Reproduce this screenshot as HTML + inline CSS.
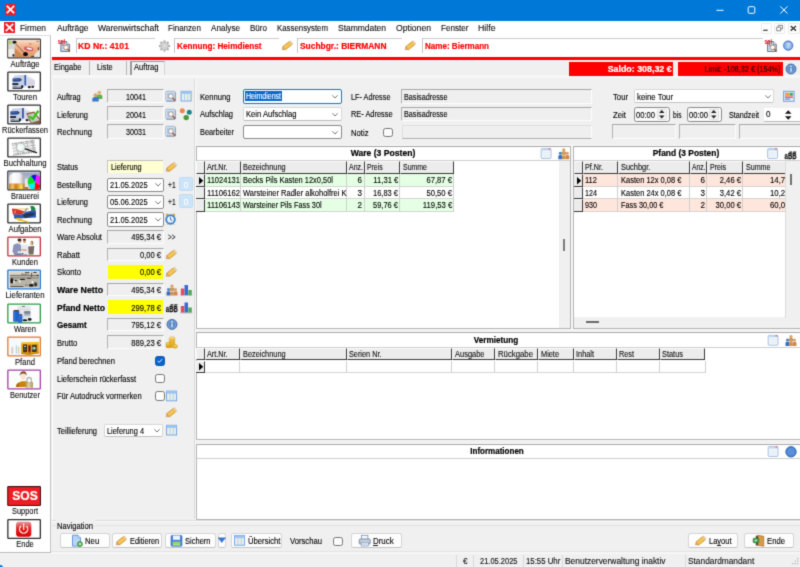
<!DOCTYPE html>
<html><head><meta charset="utf-8"><title>Auftrag</title>
<style>
html,body{margin:0;padding:0;}
body{width:800px;height:567px;overflow:hidden;background:#f0f0f0;font-family:"Liberation Sans",sans-serif;font-size:11px;}
#root{position:relative;width:800px;height:567px;overflow:hidden;background:#f0f0f0;filter:url(#soft);}
#root div{position:absolute;box-sizing:border-box;}
#root svg{position:absolute;overflow:visible;}
.t{position:absolute;white-space:nowrap;font-family:"Liberation Sans",sans-serif;}
.fld{background:#f0f0f0;border:1px solid #fcfcfc;border-top-color:#a6a6a6;border-left-color:#b2b2b2;}
.cmb{background:#fff;border:1px solid #7a7a7a;border-radius:2px;}
.btn{background:#fdfdfd;border:1px solid #d0d0d0;border-radius:3px;}
.pnl{background:#fff;border:1px solid #b8b8b8;}
.hd{background:#f0f0f0;border-right:2px solid #404040;border-bottom:2px solid #404040;border-left:1px solid #fff;border-top:1px solid #fff;}
.sb{border:2px solid #1a1a1a;background:#fff;overflow:hidden;}
.cb{background:#fff;border:1px solid #444;border-radius:2.5px;}

</style></head>
<body>
<svg width="0" height="0" style="position:absolute"><filter id="soft" x="0" y="0" width="100%" height="100%" color-interpolation-filters="sRGB"><feConvolveMatrix order="3" kernelMatrix="0.0196 0.1008 0.0196 0.1008 0.5184 0.1008 0.0196 0.1008 0.0196" edgeMode="duplicate" preserveAlpha="true"/></filter></svg>
<div id="root">
<div style="left:0px;top:0px;width:800px;height:21px;background:#0078d7;"></div>
<svg style="left:5px;top:4px" width="11" height="11" viewBox="0 0 11 11"><rect width="11" height="11" fill="#ee1c25"/><path d="M2.4 2.4L8.6 8.6M8.6 2.4L2.4 8.6" stroke="#fff" stroke-width="1.7" stroke-linecap="square"/></svg>
<svg style="left:700px;top:0" width="100" height="21" viewBox="0 0 100 21"><g stroke="#fff" stroke-width="1" fill="none"><path d="M16.400 10.300H23.600"/><rect x="48.200" y="6.700" width="6.600" height="6.600" rx="1"/><path d="M80.300 6.400L87.500 13.600M87.500 6.400L80.300 13.600"/></g></svg>
<div style="left:0px;top:21px;width:800px;height:14px;background:#fff;"></div>
<svg style="left:4px;top:22px" width="11" height="11" viewBox="0 0 11 11"><rect width="11" height="11" fill="#ee1c25"/><path d="M2.4 2.4L8.6 8.6M8.6 2.4L2.4 8.6" stroke="#fff" stroke-width="1.7" stroke-linecap="square"/></svg>
<span class="t" style="top:21.0px;font-size:8.5px;line-height:14px;color:#111;-webkit-text-stroke:.12px;left:20px;transform-origin:0 50%;transform:scaleX(0.9829);">Firmen</span>
<span class="t" style="top:21.0px;font-size:8.5px;line-height:14px;color:#111;-webkit-text-stroke:.12px;left:56.5px;transform-origin:0 50%;transform:scaleX(0.9801);">Aufträge</span>
<span class="t" style="top:21.0px;font-size:8.5px;line-height:14px;color:#111;-webkit-text-stroke:.12px;left:98px;transform-origin:0 50%;transform:scaleX(1.0062);">Warenwirtschaft</span>
<span class="t" style="top:21.0px;font-size:8.5px;line-height:14px;color:#111;-webkit-text-stroke:.12px;left:168px;transform-origin:0 50%;transform:scaleX(0.9437);">Finanzen</span>
<span class="t" style="top:21.0px;font-size:8.5px;line-height:14px;color:#111;-webkit-text-stroke:.12px;left:211px;transform-origin:0 50%;transform:scaleX(0.9587);">Analyse</span>
<span class="t" style="top:21.0px;font-size:8.5px;line-height:14px;color:#111;-webkit-text-stroke:.12px;left:250px;transform-origin:0 50%;transform:scaleX(0.9461);">Büro</span>
<span class="t" style="top:21.0px;font-size:8.5px;line-height:14px;color:#111;-webkit-text-stroke:.12px;left:277px;transform-origin:0 50%;transform:scaleX(0.9226);">Kassensystem</span>
<span class="t" style="top:21.0px;font-size:8.5px;line-height:14px;color:#111;-webkit-text-stroke:.12px;left:338px;transform-origin:0 50%;transform:scaleX(0.9958);">Stammdaten</span>
<span class="t" style="top:21.0px;font-size:8.5px;line-height:14px;color:#111;-webkit-text-stroke:.12px;left:396px;transform-origin:0 50%;transform:scaleX(1.0145);">Optionen</span>
<span class="t" style="top:21.0px;font-size:8.5px;line-height:14px;color:#111;-webkit-text-stroke:.12px;left:441px;transform-origin:0 50%;transform:scaleX(0.9539);">Fenster</span>
<span class="t" style="top:21.0px;font-size:8.5px;line-height:14px;color:#111;-webkit-text-stroke:.12px;left:477.5px;transform-origin:0 50%;transform:scaleX(1.0285);">Hilfe</span>
<div style="left:760.7px;top:22.5px;width:11.0px;height:11.3px;background:#fdfdfd;border:1px solid #ececec;border-radius:1px;"></div>
<div style="left:774px;top:22.5px;width:11px;height:11.3px;background:#fdfdfd;border:1px solid #ececec;border-radius:1px;"></div>
<div style="left:787.5px;top:22.5px;width:12.5px;height:11.3px;background:#fdfdfd;border:1px solid #ececec;border-radius:1px;"></div>
<svg style="left:755px;top:21px" width="45" height="14" viewBox="0 0 45 14"><g fill="none"><path d="M8.200 9.300H12.700" stroke="#4a4a4a" stroke-width="1.300"/><path d="M21.700 6.200h4v3.600h-4zM23.200 6v-1.600h4.200v3.600h-1.500" stroke="#7a7a7a" stroke-width=".9"/><path d="M35.700 5L41 9.600M41 5L35.700 9.600" stroke="#3a3a3a" stroke-width="1.400"/></g></svg>
<div style="left:0px;top:35px;width:51px;height:517.5px;background:#fff;border-right:1px solid #c4c4c4;border-top:1px solid #dcdcdc;border-bottom:1px solid #b8b8b8;"></div>
<div style="left:51px;top:35px;width:749px;height:22px;background:#fff;"></div>
<div style="left:52px;top:56.8px;width:748px;height:3px;background:#ff0000;"></div>
<div style="left:51px;top:550.7px;width:749px;height:1px;background:#e4e4e4;"></div>
<div style="left:51px;top:551.7px;width:749px;height:2.8px;background:#f6f6f6;"></div>
<div style="left:0px;top:553.2px;width:51px;height:1.3px;background:#f6f6f6;"></div>
<svg style="left:7px;top:38px" width="35" height="22" viewBox="0 0 35 22"><g transform="translate(0.2,0.4)"><rect x=".65" y=".65" width="32.500" height="18.900" rx=".8" fill="#fff" stroke="#333" stroke-width="1.300"/><g transform="scale(.052493) translate(-61,-45)"><defs><linearGradient id="sk" x1="0" y1="0" x2="0" y2="1"><stop offset="0" stop-color="#f9dcc6"/><stop offset=".35" stop-color="#f2b48c"/><stop offset="1" stop-color="#e09a68"/></linearGradient></defs><rect x="85" y="80" width="600" height="320" fill="url(#sk)"/><rect x="85" y="80" width="120" height="320" fill="#d4d8d2"/><rect x="85" y="250" width="110" height="150" fill="#eeeeee"/><ellipse cx="115" cy="125" rx="28" ry="38" fill="#a8d058"/><path d="M205 230L390 400H205z" fill="#cf8a55"/><path d="M600 330L685 250V400H560z" fill="#e6e6e6"/><ellipse cx="500" cy="150" rx="32" ry="18" fill="#dc9672"/><ellipse cx="470" cy="245" rx="92" ry="42" transform="rotate(12 470 245)" fill="#d9586a"/><ellipse cx="482" cy="240" rx="56" ry="17" transform="rotate(12 482 240)" fill="#fff"/><ellipse cx="200" cy="118" rx="38" ry="28" fill="#1a1a1a"/><path d="M225 150L385 320" stroke="#4a4038" stroke-width="13"/><ellipse cx="410" cy="345" rx="46" ry="40" fill="#0a0a10"/><ellipse cx="655" cy="240" rx="12" ry="30" fill="#5a4030"/><ellipse cx="640" cy="100" rx="32" ry="10" fill="#a07850"/><ellipse cx="180" cy="370" rx="18" ry="26" fill="#2a2018"/><ellipse cx="545" cy="388" rx="32" ry="11" fill="#5a3a20"/></g></g></svg>
<span class="t" style="top:57.2px;font-size:9px;line-height:14px;color:#111;-webkit-text-stroke:.12px;left:-125.5px;width:300px;text-align:center;transform-origin:50% 50%;transform:scaleX(0.8522);">Aufträge</span>
<svg style="left:7px;top:71px" width="35" height="22" viewBox="0 0 35 22"><g transform="translate(0.2,0.4)"><rect x=".65" y=".65" width="32.500" height="18.900" rx=".8" fill="#fff" stroke="#2e2e2e" stroke-width="1.300"/><g transform="scale(.052493) translate(-61,-45)"><g transform="translate(0,0)"><path d="M420 112L590 215V332H420z" fill="#d6d8ec"/><path d="M250 112L440 108L590 215L420 150z" fill="#e8eaf4"/><path d="M470 250h95v22h-95z" fill="#ecc6d0" opacity=".8"/><rect x="385" y="115" width="36" height="200" fill="#3a5aa8"/><path d="M160 185L205 125L385 115V350L160 375z" fill="#c9d2e6"/><path d="M165 178L312 172V236L165 240z" fill="#27468c"/><path d="M170 200h135v10H170z" fill="#5a82c8"/><ellipse cx="322" cy="205" rx="14" ry="18" fill="#1a2238"/><path d="M160 268h112v34H160z" fill="#161824"/><path d="M160 312h185v50H160z" fill="#b4c0d8"/><path d="M165 355h180v24H165z" fill="#272d3c"/><path d="M180 320h60v22h-60z" fill="#8a8e98"/><ellipse cx="346" cy="338" rx="22" ry="28" fill="#15161c"/><ellipse cx="402" cy="345" rx="22" ry="16" fill="#e8e8ee"/><ellipse cx="482" cy="346" rx="30" ry="22" fill="#1c1d24"/><ellipse cx="547" cy="340" rx="26" ry="20" fill="#22232a"/></g></g></g></svg>
<span class="t" style="top:90.2px;font-size:9px;line-height:14px;color:#111;-webkit-text-stroke:.12px;left:-125.5px;width:300px;text-align:center;transform-origin:50% 50%;transform:scaleX(0.8717);">Touren</span>
<svg style="left:7px;top:104px" width="35" height="22" viewBox="0 0 35 22"><g transform="translate(0.2,0.4)"><rect x=".65" y=".65" width="32.500" height="18.900" rx=".8" fill="#fff" stroke="#2e2e2e" stroke-width="1.300"/><g transform="scale(.052493) translate(-61,-45)"><g transform="translate(-42,0)"><path d="M420 112L590 215V332H420z" fill="#d6d8ec"/><path d="M250 112L440 108L590 215L420 150z" fill="#e8eaf4"/><path d="M470 250h95v22h-95z" fill="#ecc6d0" opacity=".8"/><rect x="385" y="115" width="36" height="200" fill="#3a5aa8"/><path d="M160 185L205 125L385 115V350L160 375z" fill="#c9d2e6"/><path d="M165 178L312 172V236L165 240z" fill="#27468c"/><path d="M170 200h135v10H170z" fill="#5a82c8"/><ellipse cx="322" cy="205" rx="14" ry="18" fill="#1a2238"/><path d="M160 268h112v34H160z" fill="#161824"/><path d="M160 312h185v50H160z" fill="#b4c0d8"/><path d="M165 355h180v24H165z" fill="#272d3c"/><path d="M180 320h60v22h-60z" fill="#8a8e98"/><ellipse cx="346" cy="338" rx="22" ry="28" fill="#15161c"/><ellipse cx="402" cy="345" rx="22" ry="16" fill="#e8e8ee"/><ellipse cx="482" cy="346" rx="30" ry="22" fill="#1c1d24"/><ellipse cx="547" cy="340" rx="26" ry="20" fill="#22232a"/></g><path d="M425 215L575 178L690 325V400H505z" fill="#8c5c3c"/><path d="M452 238L568 208L680 345L522 396z" fill="#c9cdc2"/><path d="M480 268L548 322L655 165" stroke="#3cc41e" stroke-width="46" fill="none"/></g></g></svg>
<span class="t" style="top:123.2px;font-size:9px;line-height:14px;color:#111;-webkit-text-stroke:.12px;left:-125.5px;width:300px;text-align:center;transform-origin:50% 50%;transform:scaleX(0.8359);">Rückerfassen</span>
<svg style="left:7px;top:137px" width="35" height="22" viewBox="0 0 35 22"><g transform="translate(0.2,0.4)"><rect x=".65" y=".65" width="32.500" height="18.900" rx=".8" fill="#fff" stroke="#2e2e2e" stroke-width="1.300"/><g transform="scale(.052493) translate(-61,-45)"><path d="M140 150L580 85L622 330L190 392z" fill="#f1f1f1"/><g stroke="#8e8e8e" stroke-width="9" fill="none"><path d="M150 200L590 135M160 255L600 190M170 310L610 245M180 362L615 300"/><path d="M225 140L270 380M330 122L375 365M430 108L475 350M520 95L565 338"/></g><g stroke="#5e5e5e" stroke-width="12" stroke-dasharray="26 16" fill="none"><path d="M150 168L580 104M175 385L610 322"/><path d="M545 100L590 330"/></g><circle cx="320" cy="235" r="82" fill="#e9f5f5" stroke="#a4acac" stroke-width="15"/><path d="M300 170l20 40 40 10-35 25-5 45-30-30-40 5 20-40-15-35z" fill="#fff" opacity=".8"/><path d="M408 262L622 338" stroke="#0e0e0e" stroke-width="24" stroke-linecap="round"/></g></g></svg>
<span class="t" style="top:156.2px;font-size:9px;line-height:14px;color:#111;-webkit-text-stroke:.12px;left:-125.5px;width:300px;text-align:center;transform-origin:50% 50%;transform:scaleX(0.8592);">Buchhaltung</span>
<svg style="left:7px;top:170px" width="35" height="22" viewBox="0 0 35 22"><g transform="translate(0.2,0.4)"><rect x=".65" y=".65" width="32.500" height="18.900" rx=".8" fill="#fff" stroke="#2e2e2e" stroke-width="1.300"/><g transform="scale(.052493) translate(-61,-45)"><defs><linearGradient id="bg5" x1="0" y1="0" x2="0" y2="1"><stop offset="0" stop-color="#97a2bf"/><stop offset=".6" stop-color="#c6cad8"/><stop offset="1" stop-color="#d8c8b8"/></linearGradient><linearGradient id="tk" x1="0" y1="0" x2="1" y2="0"><stop offset="0" stop-color="#e4e4e6"/><stop offset=".3" stop-color="#ffffff"/><stop offset=".7" stop-color="#f0f0f2"/><stop offset="1" stop-color="#a8a8ae"/></linearGradient><linearGradient id="cu" x1="0" y1="0" x2="1" y2="0"><stop offset="0" stop-color="#b87820"/><stop offset=".2" stop-color="#f4c860"/><stop offset=".45" stop-color="#c87c18"/><stop offset=".8" stop-color="#ffe060"/><stop offset="1" stop-color="#a86810"/></linearGradient><clipPath id="c5"><rect x="85" y="78" width="600" height="324"/></clipPath></defs><g clip-path="url(#c5)"><rect x="85" y="78" width="600" height="324" fill="url(#bg5)"/><path d="M400 400V230Q400 200 430 200T460 230V400z" fill="#ebe4ec"/><path d="M98 300V190Q98 85 240 85T385 190V300z" fill="url(#tk)"/><rect x="98" y="298" width="292" height="104" fill="url(#cu)"/><rect x="98" y="298" width="292" height="14" fill="#d8a050" opacity=".7"/><path d="M390 360h70v42h-70z" fill="#b87830"/><path d="M595 270L513.6 153.7A142 142 0 0 1 619.7 130.2z" fill="#1212e6"/><path d="M595 270L619.7 130.2A142 142 0 0 1 718.0 341.0z" fill="#ff12ff"/><path d="M595 270L718.0 341.0A142 142 0 0 1 575.2 410.6z" fill="#ff0a0a"/><path d="M595 270L575.2 410.6A142 142 0 0 1 461.6 318.6z" fill="#00f2f2"/><path d="M595 270L461.6 318.6A142 142 0 0 1 513.6 153.7z" fill="#00e222"/></g></g></g></svg>
<span class="t" style="top:189.2px;font-size:9px;line-height:14px;color:#111;-webkit-text-stroke:.12px;left:-125.5px;width:300px;text-align:center;transform-origin:50% 50%;transform:scaleX(0.8228);">Brauerei</span>
<svg style="left:7px;top:203px" width="35" height="22" viewBox="0 0 35 22"><g transform="translate(0.2,0.4)"><rect x=".65" y=".65" width="32.500" height="18.900" rx=".8" fill="#fff" stroke="#2e2e2e" stroke-width="1.300"/><g transform="scale(.052493) translate(-61,-45)"><path d="M200 155L480 150" stroke="#f0b424" stroke-width="15"/><path d="M150 140L232 150L402 200L330 262L170 256z" fill="#e0301e"/><path d="M205 175l25 5-15 60-20-5z" fill="#c8c8e0" opacity=".7"/><path d="M180 250L330 256L420 202L600 170L612 312L200 337z" fill="#2a5ab8"/><path d="M350 250L600 200V255L400 330z" fill="#27303f" opacity=".85"/><path d="M442 138L360 250" stroke="#8c8c92" stroke-width="26"/><path d="M500 95H560L602 140L590 182L520 170z" fill="#1a8a3a"/><path d="M520 170L600 185L605 240L500 215z" fill="#2f55a0"/><ellipse cx="290" cy="350" rx="62" ry="25" transform="rotate(15 290 350)" fill="#f0c222"/><path d="M330 365L460 400" stroke="#e8b212" stroke-width="26" stroke-linecap="round"/></g></g></svg>
<span class="t" style="top:222.2px;font-size:9px;line-height:14px;color:#111;-webkit-text-stroke:.12px;left:-125.5px;width:300px;text-align:center;transform-origin:50% 50%;transform:scaleX(0.8561);">Aufgaben</span>
<svg style="left:7px;top:236px" width="35" height="22" viewBox="0 0 35 22"><g transform="translate(0.2,0.4)"><rect x=".65" y=".65" width="32.500" height="18.900" rx=".8" fill="#fafefe" stroke="#c62f3a" stroke-width="1.300"/><g transform="scale(.052493) translate(-61,-45)"><path d="M200 380H440V400H200z" fill="#5a7aa8"/><path d="M160 335L182 205L252 176L322 202L332 385L192 392z" fill="#8a94b8"/><ellipse cx="300" cy="138" rx="30" ry="36" fill="#dfa888"/><ellipse cx="295" cy="112" rx="38" ry="26" fill="#33261e"/><path d="M322 202L452 200L462 392L332 392z" fill="#e6eaf2"/><ellipse cx="390" cy="142" rx="26" ry="30" fill="#d89870"/><ellipse cx="390" cy="108" rx="30" ry="18" fill="#4a3020"/><path d="M460 236L577 230L562 382L470 382z" fill="#776a68"/><ellipse cx="533" cy="172" rx="27" ry="42" fill="#a87850"/><ellipse cx="514" cy="182" rx="20" ry="26" fill="#f2c4a4"/><path d="M330 285L432 296L428 322L332 312z" fill="#d8a080"/><path d="M258 330L442 342L440 368L262 360z" fill="#e8f2f2"/><ellipse cx="352" cy="372" rx="22" ry="9" fill="#222"/><path d="M470 380h90v18h-90z" fill="#98b878"/></g></g></svg>
<span class="t" style="top:255.2px;font-size:9px;line-height:14px;color:#111;-webkit-text-stroke:.12px;left:-125.5px;width:300px;text-align:center;transform-origin:50% 50%;transform:scaleX(0.8379);">Kunden</span>
<svg style="left:7px;top:269px" width="35" height="22" viewBox="0 0 35 22"><g transform="translate(0.2,0.4)"><rect x=".65" y=".65" width="32.500" height="18.900" rx=".8" fill="#fbe6d8" stroke="#1b79da" stroke-width="1.300"/><g transform="scale(.052493) translate(-61,-45)"><rect x="112" y="92" width="556" height="296" fill="#b7b3a7"/><rect x="112" y="92" width="556" height="58" fill="#d9d5c9"/><path d="M112 150h556v16H112z" fill="#6b6961"/><path d="M400 98h82v20h-82zM560 96h60v16h-60z" fill="#33332f"/><rect x="520" y="108" width="15" height="95" fill="#3a3a37"/><path d="M330 120L500 150L330 165z" fill="#8a877d"/><path d="M112 190h556v30H112z" fill="#989488"/><ellipse cx="150" cy="262" rx="32" ry="52" fill="#1b1b19"/><ellipse cx="222" cy="255" rx="28" ry="15" fill="#292927"/><ellipse cx="352" cy="236" rx="52" ry="12" fill="#1b1b19"/><ellipse cx="480" cy="215" rx="40" ry="10" fill="#33332f"/><ellipse cx="190" cy="282" rx="15" ry="36" fill="#f1f1e9"/><ellipse cx="300" cy="272" rx="16" ry="32" fill="#e9e9e1"/><ellipse cx="540" cy="286" rx="15" ry="26" fill="#fff"/><ellipse cx="520" cy="350" rx="46" ry="25" fill="#1a1a18"/><ellipse cx="602" cy="330" rx="30" ry="42" fill="#3a3a37"/><ellipse cx="640" cy="160" rx="22" ry="12" fill="#33332f"/><path d="M120 365h250v16H120z" fill="#3f3e3a"/><path d="M400 330h60v30h-60z" fill="#8f8c82"/></g></g></svg>
<span class="t" style="top:288.2px;font-size:9px;line-height:14px;color:#111;-webkit-text-stroke:.12px;left:-125.5px;width:300px;text-align:center;transform-origin:50% 50%;transform:scaleX(0.8658);">Lieferanten</span>
<svg style="left:7px;top:303px" width="35" height="22" viewBox="0 0 35 22"><g transform="translate(0.2,0.4)"><rect x=".65" y=".65" width="32.500" height="18.900" rx=".8" fill="#fffaff" stroke="#2b9a48" stroke-width="1.300"/><g transform="scale(.052493) translate(-61,-45)"><defs><linearGradient id="ib" x1="0" y1="0" x2="0" y2="1"><stop offset="0" stop-color="#56657c"/><stop offset="1" stop-color="#d4d8dc"/></linearGradient></defs><rect x="250" y="95" width="262" height="296" fill="#e9ebed"/><g stroke="#c9ccd0" stroke-width="8"><path d="M250 160h262M250 230h262M250 300h262M315 95v296M380 95v296M445 95v296"/></g><rect x="340" y="93" width="62" height="17" fill="#6a6a6e"/><rect x="385" y="195" width="117" height="98" fill="url(#ib)"/><rect x="175" y="178" width="116" height="218" rx="22" fill="#1f60c9"/><rect x="186" y="170" width="96" height="20" rx="6" fill="#4a3a2a"/><rect x="195" y="200" width="22" height="180" fill="#4d8ae8" opacity=".6"/><rect x="265" y="256" width="86" height="156" rx="18" fill="#2a68d2"/><rect x="270" y="250" width="76" height="18" rx="6" fill="#5a4a3a"/><ellipse cx="400" cy="366" rx="46" ry="18" fill="#111"/><ellipse cx="490" cy="350" rx="36" ry="26" fill="#191919"/><ellipse cx="440" cy="340" rx="16" ry="12" fill="#e8e8e8"/></g></g></svg>
<span class="t" style="top:322.2px;font-size:9px;line-height:14px;color:#111;-webkit-text-stroke:.12px;left:-125.5px;width:300px;text-align:center;transform-origin:50% 50%;transform:scaleX(0.8401);">Waren</span>
<svg style="left:7px;top:336px" width="35" height="22" viewBox="0 0 35 22"><g transform="translate(0.2,0.4)"><rect x=".65" y=".65" width="32.500" height="18.900" rx=".8" fill="#f4faff" stroke="#e07a30" stroke-width="1.300"/><g transform="scale(.052493) translate(-61,-45)"><rect x="140" y="252" width="36" height="125" rx="10" fill="#d9cabb"/><rect x="150" y="230" width="14" height="40" fill="#e6dccf"/><rect x="224" y="212" width="28" height="165" rx="10" fill="#b7dbd0"/><rect x="266" y="242" width="30" height="135" rx="10" fill="#e9d2b2"/><path d="M328 165L660 150L666 366L482 396L328 376z" fill="#e6a00e"/><path d="M328 160L660 146V186L328 196z" fill="#f8c41e"/><path d="M328 350L482 372L666 342V368L482 398L328 378z" fill="#c8860a"/><rect x="365" y="200" width="72" height="146" fill="#2a1a18"/><rect x="465" y="215" width="42" height="136" fill="#5a1018"/><path d="M535 210L622 205V338L535 342z" fill="#3a2a20"/><circle cx="400" cy="235" r="18" fill="#e8e8f0"/><circle cx="398" cy="285" r="20" fill="#2a8a4a"/><circle cx="402" cy="325" r="14" fill="#c82828"/><circle cx="486" cy="330" r="12" fill="#3a5a9a"/><circle cx="570" cy="270" r="32" fill="#7fb898"/><circle cx="585" cy="265" r="14" fill="#e8f0e8"/></g></g></svg>
<span class="t" style="top:355.2px;font-size:9px;line-height:14px;color:#111;-webkit-text-stroke:.12px;left:-125.5px;width:300px;text-align:center;transform-origin:50% 50%;transform:scaleX(0.8499);">Pfand</span>
<svg style="left:7px;top:369px" width="35" height="22" viewBox="0 0 35 22"><g transform="translate(0.2,0.4)"><rect x=".65" y=".65" width="32.500" height="18.900" rx=".8" fill="#fbfffb" stroke="#a23fa8" stroke-width="1.300"/><g transform="scale(.052493) translate(-61,-45)"><defs><linearGradient id="lk" x1="0" y1="0" x2="1" y2="0"><stop offset="0" stop-color="#b89a58"/><stop offset=".4" stop-color="#e2d2a4"/><stop offset="1" stop-color="#b09458"/></linearGradient></defs><path d="M225 378Q240 292 340 270H420Q472 292 482 378z" fill="#c88408"/><path d="M225 378Q235 330 270 300L300 378z" fill="#a86c04"/><ellipse cx="365" cy="180" rx="50" ry="68" fill="#f9e3d6"/><path d="M300 175Q295 85 365 80T432 175Q420 120 365 122T300 175z" fill="#8a4a28"/><path d="M438 292V245Q438 200 480 200T522 245V292" stroke="#b4b4b4" stroke-width="26" fill="none"/><rect x="414" y="288" width="138" height="108" rx="8" fill="url(#lk)"/><rect x="414" y="288" width="138" height="12" fill="#8c7a4c" opacity=".5"/></g></g></svg>
<span class="t" style="top:388.2px;font-size:9px;line-height:14px;color:#111;-webkit-text-stroke:.12px;left:-125.5px;width:300px;text-align:center;transform-origin:50% 50%;transform:scaleX(0.8326);">Benutzer</span>
<svg style="left:7px;top:485px" width="35" height="22" viewBox="0 0 35 22"><g transform="translate(0.2,0.9)"><rect x=".65" y=".65" width="32.500" height="18.900" rx=".8" fill="#d8141c" stroke="#3a1212" stroke-width="1.300"/><g transform="scale(.052493) translate(-61,-45)"><rect x="85" y="70" width="600" height="340" fill="#ee1c24"/></g></g></svg>
<span class="t" style="top:489.0px;font-size:12.5px;line-height:14px;color:#fff;font-weight:bold;-webkit-text-stroke:.22px;left:-125.4px;width:300px;text-align:center;transform-origin:50% 50%;transform:scaleX(0.9657);">SOS</span>
<span class="t" style="top:504.3px;font-size:9px;line-height:14px;color:#111;-webkit-text-stroke:.12px;left:-125.5px;width:300px;text-align:center;transform-origin:50% 50%;transform:scaleX(0.8246);">Support</span>
<svg style="left:7px;top:518px" width="35" height="22" viewBox="0 0 35 22"><g transform="translate(0.2,0.9)"><rect x=".65" y=".65" width="32.500" height="18.900" rx=".8" fill="#fff" stroke="#2e2e2e" stroke-width="1.300"/><g transform="scale(.052493) translate(-61,-45)"><defs><linearGradient id="pw" x1="0" y1="0" x2="0" y2="1"><stop offset="0" stop-color="#e89a9a"/><stop offset=".45" stop-color="#e22222"/><stop offset="1" stop-color="#d80000"/></linearGradient></defs><rect x="230" y="100" width="290" height="285" rx="55" fill="url(#pw)"/><path d="M318 185A78 78 0 1 0 432 185" stroke="#fff" stroke-width="22" fill="none" stroke-linecap="round"/><path d="M375 140V245" stroke="#fff" stroke-width="22" stroke-linecap="round"/></g></g></svg>
<span class="t" style="top:537.2px;font-size:9px;line-height:14px;color:#111;-webkit-text-stroke:.12px;left:-125.5px;width:300px;text-align:center;transform-origin:50% 50%;transform:scaleX(0.8321);">Ende</span>
<svg style="left:58px;top:39px" width="14" height="14" viewBox="0 0 14 14"><g transform="translate(0,0.2)"><path d="M2.800 2.300h5.800l3 3v7h-8.800z" fill="#bcd4ee" stroke="#56667a" stroke-width=".8"/><path d="M8.600 2.300v3h3" fill="#eef4fa" stroke="#56667a" stroke-width=".6"/><circle cx="8" cy="8.200" r="2.300" fill="#fff" stroke="#b4845a" stroke-width=".9"/><path d="M9.600 9.900l2.200 2.300" stroke="#9a4a22" stroke-width="1.300"/><text x="-.3" y="5.200" font-family="Liberation Sans" font-size="6.500" font-weight="bold" fill="#f01822" textLength="7.600" lengthAdjust="spacingAndGlyphs">sql</text></g></svg>
<div style="left:75.5px;top:38px;width:79.5px;height:15px;border-top:1.500px solid #cbcbcb;border-left:1px solid #c4c4c4;background:#fff;"></div>
<span class="t" style="top:39.3px;font-size:9.5px;line-height:14px;color:#ff0000;font-weight:bold;-webkit-text-stroke:.22px;left:78.0px;transform-origin:0 50%;transform:scaleX(0.911);">KD Nr.: 4101</span>
<svg style="left:158px;top:40px" width="14" height="14" viewBox="0 0 14 14"><g transform="translate(0.5,0)"><g transform="translate(6,6)"><g fill="#adadad"><rect x="-1.100" y="-5.600" width="2.200" height="3" transform="rotate(0)"/><rect x="-1.100" y="-5.600" width="2.200" height="3" transform="rotate(45)"/><rect x="-1.100" y="-5.600" width="2.200" height="3" transform="rotate(90)"/><rect x="-1.100" y="-5.600" width="2.200" height="3" transform="rotate(135)"/><rect x="-1.100" y="-5.600" width="2.200" height="3" transform="rotate(180)"/><rect x="-1.100" y="-5.600" width="2.200" height="3" transform="rotate(225)"/><rect x="-1.100" y="-5.600" width="2.200" height="3" transform="rotate(270)"/><rect x="-1.100" y="-5.600" width="2.200" height="3" transform="rotate(315)"/></g><circle r="4.200" fill="#bcbcbc"/><circle r="3.200" fill="#d6d6d6"/><circle r="1.400" fill="#f6f6f6" stroke="#a8a8a8" stroke-width=".5"/></g></g></svg>
<div style="left:174px;top:38px;width:105px;height:15px;border-top:1.500px solid #cbcbcb;border-left:1px solid #c4c4c4;background:#fff;"></div>
<span class="t" style="top:39.3px;font-size:9.5px;line-height:14px;color:#ff0000;font-weight:bold;-webkit-text-stroke:.22px;left:176.5px;transform-origin:0 50%;transform:scaleX(0.8607);">Kennung: Heimdienst</span>
<svg style="left:281px;top:39px" width="14" height="14" viewBox="0 0 14 14"><g transform="translate(0.5,0.5)"><g transform="rotate(-38 6 6)"><rect x="1.300" y="3.900" width="8.600" height="4.200" rx=".9" fill="#f0b636" stroke="#c48a2c" stroke-width=".6"/><path d="M1.600 4.100L-.9 6l2.500 1.900z" fill="#e0a878" stroke="#c08850" stroke-width=".4"/><rect x="9.300" y="3.900" width="1.900" height="4.200" rx=".8" fill="#f6d09a" stroke="#c89a58" stroke-width=".4"/><path d="M2 5.300h7.300M2 6.700h7.300" stroke="#f8da80" stroke-width=".7"/></g></g></svg>
<div style="left:297px;top:38px;width:105px;height:15px;border-top:1.500px solid #cbcbcb;border-left:1px solid #c4c4c4;background:#fff;"></div>
<span class="t" style="top:39.3px;font-size:9.5px;line-height:14px;color:#ff0000;font-weight:bold;-webkit-text-stroke:.22px;left:299.5px;transform-origin:0 50%;transform:scaleX(0.8859);">Suchbgr.: BIERMANN</span>
<svg style="left:404px;top:39px" width="14" height="14" viewBox="0 0 14 14"><g transform="translate(0.5,0.5)"><g transform="rotate(-38 6 6)"><rect x="1.300" y="3.900" width="8.600" height="4.200" rx=".9" fill="#f0b636" stroke="#c48a2c" stroke-width=".6"/><path d="M1.600 4.100L-.9 6l2.500 1.900z" fill="#e0a878" stroke="#c08850" stroke-width=".4"/><rect x="9.300" y="3.900" width="1.900" height="4.200" rx=".8" fill="#f6d09a" stroke="#c89a58" stroke-width=".4"/><path d="M2 5.300h7.300M2 6.700h7.300" stroke="#f8da80" stroke-width=".7"/></g></g></svg>
<div style="left:422px;top:38px;width:340.5px;height:15px;border-top:1.500px solid #cbcbcb;border-left:1px solid #c4c4c4;background:#fff;"></div>
<span class="t" style="top:39.3px;font-size:9.5px;line-height:14px;color:#ff0000;font-weight:bold;-webkit-text-stroke:.22px;left:424.5px;transform-origin:0 50%;transform:scaleX(0.8477);">Name: Biermann</span>
<svg style="left:764px;top:39px" width="14" height="14" viewBox="0 0 14 14"><g transform="translate(0.7,0.2)"><path d="M2.800 2.300h5.800l3 3v7h-8.800z" fill="#bcd4ee" stroke="#56667a" stroke-width=".8"/><path d="M8.600 2.300v3h3" fill="#eef4fa" stroke="#56667a" stroke-width=".6"/><circle cx="8" cy="8.200" r="2.300" fill="#fff" stroke="#b4845a" stroke-width=".9"/><path d="M9.600 9.900l2.200 2.300" stroke="#9a4a22" stroke-width="1.300"/><text x="-.3" y="5.200" font-family="Liberation Sans" font-size="6.500" font-weight="bold" fill="#f01822" textLength="7.600" lengthAdjust="spacingAndGlyphs">sql</text></g></svg>
<svg style="left:782px;top:39px" width="14" height="14" viewBox="0 0 14 14"><g transform="translate(0.2,0.6)"><circle cx="6" cy="6" r="4.700" fill="#7aa2dc" stroke="#4a78c0" stroke-width=".9"/><circle cx="6" cy="6" r="3.300" fill="#9abcea"/><text x="6" y="8.300" text-anchor="middle" font-family="Liberation Sans" font-size="6.500" font-weight="bold" fill="#e6effa">?</text></g></svg>
<span class="t" style="top:60.2px;font-size:9px;line-height:14px;color:#000;-webkit-text-stroke:.12px;left:54px;transform-origin:0 50%;transform:scaleX(0.8325);">Eingabe</span>
<div style="left:88.5px;top:61px;width:1px;height:13.5px;background:#b4b4b4;"></div>
<span class="t" style="top:60.2px;font-size:9px;line-height:14px;color:#000;-webkit-text-stroke:.12px;left:97px;transform-origin:0 50%;transform:scaleX(0.8151);">Liste</span>
<div style="left:125.5px;top:61px;width:1px;height:13.5px;background:#b4b4b4;"></div>
<div style="left:129.5px;top:60.5px;width:35px;height:14.5px;border-left:2px solid #9a9a9a;border-top:1px solid #9a9a9a;border-right:1px solid #d4d4d4;background:#f3f3f3;"></div>
<span class="t" style="top:60.4px;font-size:9px;line-height:14px;color:#000;-webkit-text-stroke:.12px;left:134px;transform-origin:0 50%;transform:scaleX(0.8439);">Auftrag</span>
<div style="left:52px;top:74.8px;width:748px;height:3.7px;background:#f7f7f7;"></div>
<div style="left:569px;top:62px;width:104px;height:13.5px;background:#ff0000;"></div>
<span class="t" style="top:62.0px;font-size:9.5px;line-height:14px;color:#fff;font-weight:bold;-webkit-text-stroke:.22px;right:128.5px;transform-origin:100% 50%;transform:scaleX(0.9322);">Saldo: 308,32 €</span>
<div style="left:677.5px;top:62px;width:105px;height:13.5px;background:#ff0000;"></div>
<span class="t" style="top:62.2px;font-size:9px;line-height:14px;color:#200000;-webkit-text-stroke:.12px;right:19px;transform-origin:100% 50%;transform:scaleX(0.8124);">Limit: -108,32 € (154%)</span>
<svg style="left:785px;top:63px" width="14" height="14" viewBox="0 0 14 14"><g transform="translate(0,0)"><circle cx="6" cy="6" r="5" fill="#4c7cba" stroke="#3a66a4" stroke-width=".8"/><circle cx="6" cy="6" r="3.900" fill="#5c8ac6" stroke="#a4c0e4" stroke-width=".5"/><rect x="5.400" y="5" width="1.200" height="3.800" fill="#f4f8ff"/><circle cx="6" cy="3.500" r=".8" fill="#f4f8ff"/></g></svg>
<div style="left:51.5px;top:79px;width:1px;height:440px;background:#fdfdfd;"></div>
<div style="left:194px;top:79px;width:1px;height:440px;background:#dadada;"></div>
<div style="left:195px;top:79px;width:1px;height:66px;background:#fbfbfb;"></div>
<span class="t" style="top:89.75px;font-size:9px;line-height:14px;color:#000;-webkit-text-stroke:.12px;left:57px;transform-origin:0 50%;transform:scaleX(0.8095);">Auftrag</span>
<div class="fld" style="left:107px;top:88.5px;width:56.5px;height:14.5px;background:#efefef;"></div>
<span class="t" style="top:89.75px;font-size:9px;line-height:14px;color:#000;-webkit-text-stroke:.12px;left:-14.5px;width:300px;text-align:center;transform-origin:50% 50%;transform:scaleX(0.799);">10041</span>
<svg style="left:165px;top:90px" width="14" height="14" viewBox="0 0 14 14"><g transform="translate(0,0.45)"><rect x="1" y="1.200" width="9.600" height="9.800" rx="1.200" fill="#5a6e8c"/><rect x=".700" y=".800" width="9.300" height="9.500" rx="1" fill="#dfe9f4" stroke="#8ea6c6" stroke-width=".7"/><rect x="2" y="2.200" width="6.700" height="6.800" fill="#a9c9ee"/><circle cx="5.900" cy="5.700" r="2.300" fill="#fbfdff" stroke="#b08a6a" stroke-width=".8"/><path d="M7.600 7.500l2.700 2.800" stroke="#a2542c" stroke-width="1.300"/></g></svg>
<span class="t" style="top:107.75px;font-size:9px;line-height:14px;color:#000;-webkit-text-stroke:.12px;left:57px;transform-origin:0 50%;transform:scaleX(0.826);">Lieferung</span>
<div class="fld" style="left:107px;top:106px;width:56.5px;height:15px;background:#efefef;"></div>
<span class="t" style="top:107.75px;font-size:9px;line-height:14px;color:#000;-webkit-text-stroke:.12px;left:-14.5px;width:300px;text-align:center;transform-origin:50% 50%;transform:scaleX(0.799);">20041</span>
<svg style="left:165px;top:108px" width="14" height="14" viewBox="0 0 14 14"><g transform="translate(0,0.45)"><rect x="1" y="1.200" width="9.600" height="9.800" rx="1.200" fill="#5a6e8c"/><rect x=".700" y=".800" width="9.300" height="9.500" rx="1" fill="#dfe9f4" stroke="#8ea6c6" stroke-width=".7"/><rect x="2" y="2.200" width="6.700" height="6.800" fill="#a9c9ee"/><circle cx="5.900" cy="5.700" r="2.300" fill="#fbfdff" stroke="#b08a6a" stroke-width=".8"/><path d="M7.600 7.500l2.700 2.800" stroke="#a2542c" stroke-width="1.300"/></g></svg>
<span class="t" style="top:124.75px;font-size:9px;line-height:14px;color:#000;-webkit-text-stroke:.12px;left:57px;transform-origin:0 50%;transform:scaleX(0.8527);">Rechnung</span>
<div class="fld" style="left:107px;top:123.5px;width:56.5px;height:15.0px;background:#efefef;"></div>
<span class="t" style="top:124.75px;font-size:9px;line-height:14px;color:#000;-webkit-text-stroke:.12px;left:-14.5px;width:300px;text-align:center;transform-origin:50% 50%;transform:scaleX(0.799);">30031</span>
<svg style="left:165px;top:125px" width="14" height="14" viewBox="0 0 14 14"><g transform="translate(0,0.45)"><rect x="1" y="1.200" width="9.600" height="9.800" rx="1.200" fill="#5a6e8c"/><rect x=".700" y=".800" width="9.300" height="9.500" rx="1" fill="#dfe9f4" stroke="#8ea6c6" stroke-width=".7"/><rect x="2" y="2.200" width="6.700" height="6.800" fill="#a9c9ee"/><circle cx="5.900" cy="5.700" r="2.300" fill="#fbfdff" stroke="#b08a6a" stroke-width=".8"/><path d="M7.600 7.500l2.700 2.800" stroke="#a2542c" stroke-width="1.300"/></g></svg>
<svg style="left:91px;top:90px" width="14" height="14" viewBox="0 0 14 14"><g transform="translate(0.5,0)"><circle cx="7.800" cy="2.600" r="1.900" fill="#e8b070"/><path d="M4.800 9V6.500q0-2 3-2t3 2V9z" fill="#5ab04a"/><circle cx="4" cy="5.200" r="1.900" fill="#e0a060"/><path d="M.800 11.500V9q0-2 3.200-2t3.200 2v2.500z" fill="#3a78c8"/></g></svg>
<svg style="left:180px;top:90px" width="14" height="14" viewBox="0 0 14 14"><g transform="translate(0.5,0.5)"><rect x=".600" y=".800" width="10" height="9.700" fill="#e9f1e6" stroke="#6a9ee0" stroke-width=".9"/><rect x=".600" y=".800" width="10" height="2.600" fill="#9cc4f0"/><path d="M4 3.400v7M7.300 3.400v7" stroke="#a4c6ec" stroke-width=".8"/></g></svg>
<svg style="left:179px;top:108px" width="14" height="14" viewBox="0 0 14 14"><g transform="translate(0.5,0)"><circle cx="2.800" cy="2.800" r="2.500" fill="#f0844a"/><circle cx="9.800" cy="4.300" r="2.500" fill="#17868a"/><circle cx="6.700" cy="9.600" r="2.700" fill="#4a9a3a"/></g></svg>
<span class="t" style="top:89.9px;font-size:9px;line-height:14px;color:#000;-webkit-text-stroke:.12px;left:199.5px;transform-origin:0 50%;transform:scaleX(0.8461);">Kennung</span>
<div style="left:243px;top:88.5px;width:98.5px;height:15.0px;background:#fff;border:1px solid #0a7ad8;border-bottom-color:#0a7ad8;border-radius:2px;"></div>
<svg style="left:332.0px;top:94.8px" width="6" height="3.500" viewBox="0 0 6 3.500"><path d="M.300 .300L3 3 5.700 .300" stroke="#555" stroke-width=".8" fill="none"/></svg>
<div style="left:245px;top:91px;width:37px;height:9.5px;background:#0a68cc;"></div>
<span class="t" style="top:89.3px;font-size:9px;line-height:14px;color:#fff;-webkit-text-stroke:.12px;left:246px;transform-origin:0 50%;transform:scaleX(0.7772);">Heimdienst</span>
<span class="t" style="top:107.3px;font-size:9px;line-height:14px;color:#000;-webkit-text-stroke:.12px;left:199.5px;transform-origin:0 50%;transform:scaleX(0.8348);">Aufschlag</span>
<div style="left:243px;top:107px;width:98.5px;height:14.299999999999997px;background:#fff;border:1px solid #d8d8d8;border-bottom-color:#bcbcbc;border-radius:2px;"></div>
<svg style="left:332.0px;top:112.95px" width="6" height="3.500" viewBox="0 0 6 3.500"><path d="M.300 .300L3 3 5.700 .300" stroke="#555" stroke-width=".8" fill="none"/></svg>
<span class="t" style="top:107.3px;font-size:9px;line-height:14px;color:#000;-webkit-text-stroke:.12px;left:246px;transform-origin:0 50%;transform:scaleX(0.8481);">Kein Aufschlag</span>
<span class="t" style="top:125.3px;font-size:9px;line-height:14px;color:#000;-webkit-text-stroke:.12px;left:199.5px;transform-origin:0 50%;transform:scaleX(0.8187);">Bearbeiter</span>
<div style="left:243px;top:124.5px;width:98.5px;height:14.5px;background:#fff;border:1px solid #8a8a8a;border-bottom-color:#8a8a8a;border-radius:2px;"></div>
<svg style="left:332.0px;top:130.55px" width="6" height="3.500" viewBox="0 0 6 3.500"><path d="M.300 .300L3 3 5.700 .300" stroke="#555" stroke-width=".8" fill="none"/></svg>
<span class="t" style="top:89.9px;font-size:9px;line-height:14px;color:#000;-webkit-text-stroke:.12px;left:350.5px;transform-origin:0 50%;transform:scaleX(0.8139);">LF- Adresse</span>
<span class="t" style="top:107.3px;font-size:9px;line-height:14px;color:#000;-webkit-text-stroke:.12px;left:350.5px;transform-origin:0 50%;transform:scaleX(0.8213);">RE- Adresse</span>
<span class="t" style="top:125.6px;font-size:9px;line-height:14px;color:#000;-webkit-text-stroke:.12px;left:350.5px;transform-origin:0 50%;transform:scaleX(0.853);">Notiz</span>
<div style="left:383px;top:127.8px;width:9.5px;height:9.5px;background:#fbfbfb;border:1px solid #767676;border-radius:2.500px;"></div>
<div class="fld" style="left:401px;top:88.5px;width:190.5px;height:15.0px;background:#efefef;"></div>
<span class="t" style="top:89.9px;font-size:9px;line-height:14px;color:#000;-webkit-text-stroke:.12px;left:403.6px;transform-origin:0 50%;transform:scaleX(0.8051);">Basisadresse</span>
<div class="fld" style="left:401px;top:107px;width:190.5px;height:14.299999999999997px;background:#efefef;"></div>
<span class="t" style="top:107.3px;font-size:9px;line-height:14px;color:#000;-webkit-text-stroke:.12px;left:403.6px;transform-origin:0 50%;transform:scaleX(0.8051);">Basisadresse</span>
<div class="fld" style="left:401.5px;top:125px;width:190.0px;height:13.800000000000011px;background:#efefef;border-top-color:#e0e0e0;border-left-color:#e0e0e0;border-bottom-color:#b0b0b0;"></div>
<span class="t" style="top:89.7px;font-size:9px;line-height:14px;color:#000;-webkit-text-stroke:.12px;left:613px;transform-origin:0 50%;transform:scaleX(0.8564);">Tour</span>
<div style="left:633.5px;top:88.8px;width:140.5px;height:14.200000000000003px;background:#fff;border:1px solid #d8d8d8;border-bottom-color:#c4c4c4;border-radius:2px;"></div>
<svg style="left:764.5px;top:94.7px" width="6" height="3.500" viewBox="0 0 6 3.500"><path d="M.300 .300L3 3 5.700 .300" stroke="#555" stroke-width=".8" fill="none"/></svg>
<span class="t" style="top:89.7px;font-size:9px;line-height:14px;color:#000;-webkit-text-stroke:.12px;left:636.5px;transform-origin:0 50%;transform:scaleX(0.8701);">keine Tour</span>
<svg style="left:783px;top:90px" width="14" height="14" viewBox="0 0 14 14"><g transform="translate(0,0.5)"><rect x=".600" y=".800" width="10.500" height="10" fill="#dce8f8" stroke="#6a9ad8" stroke-width=".9"/><rect x="2" y="2.300" width="4" height="3" fill="#f0a030"/><rect x="6.500" y="2.300" width="3.300" height="3" fill="#4aa85a"/><rect x="2" y="6" width="7.800" height="1.300" fill="#e84a4a"/><rect x="2" y="8" width="5" height="1.300" fill="#6a9ad8"/></g></svg>
<span class="t" style="top:107.5px;font-size:9px;line-height:14px;color:#000;-webkit-text-stroke:.12px;left:612.5px;transform-origin:0 50%;transform:scaleX(0.8524);">Zeit</span>
<div style="left:633.5px;top:107px;width:36.0px;height:14.8px;background:#fafafa;border:1px solid #8a8a8a;border-radius:2.500px;"></div>
<span class="t" style="top:107.5px;font-size:9px;line-height:14px;color:#000;-webkit-text-stroke:.12px;left:635.5px;transform-origin:0 50%;transform:scaleX(0.8433);">00:00</span>
<div style="left:656.5px;top:108.5px;width:10.5px;height:11.8px;background:#f4f4f4;border:1px solid #e0e0e0;border-radius:1.500px;"></div>
<svg style="left:659.0px;top:110.300px" width="5.500" height="8.500" viewBox="0 0 5.500 8.500"><path d="M0 3L2.750 0 5.500 3zM0 5.500L2.750 8.500 5.500 5.500z" fill="#222"/></svg>
<span class="t" style="top:107.5px;font-size:9px;line-height:14px;color:#000;-webkit-text-stroke:.12px;left:672.7px;transform-origin:0 50%;transform:scaleX(0.7381);">bis</span>
<div style="left:686.5px;top:107px;width:35.0px;height:14.8px;background:#fafafa;border:1px solid #8a8a8a;border-radius:2.500px;"></div>
<span class="t" style="top:107.5px;font-size:9px;line-height:14px;color:#000;-webkit-text-stroke:.12px;left:688.5px;transform-origin:0 50%;transform:scaleX(0.8433);">00:00</span>
<div style="left:708.5px;top:108.5px;width:10.5px;height:11.8px;background:#f4f4f4;border:1px solid #e0e0e0;border-radius:1.500px;"></div>
<svg style="left:711.0px;top:110.300px" width="5.500" height="8.500" viewBox="0 0 5.500 8.500"><path d="M0 3L2.750 0 5.500 3zM0 5.500L2.750 8.500 5.500 5.500z" fill="#222"/></svg>
<span class="t" style="top:107.5px;font-size:9px;line-height:14px;color:#000;-webkit-text-stroke:.12px;left:729px;transform-origin:0 50%;transform:scaleX(0.7993);">Standzeit</span>
<div style="left:764px;top:107.5px;width:36px;height:14px;background:#fff;border-bottom:1px solid #b8b8b8;"></div>
<span class="t" style="top:107.3px;font-size:9px;line-height:14px;color:#000;-webkit-text-stroke:.12px;left:766.2px;transform-origin:0 50%;transform:scaleX(0.8972);">0</span>
<svg style="left:785px;top:109.500px" width="6.500" height="10" viewBox="0 0 6.500 10"><path d="M0 3.800L3.250 .300 6.500 3.800zM0 6.200L3.250 9.700 6.500 6.200z" fill="#111"/></svg>
<div class="fld" style="left:612px;top:124.3px;width:63.5px;height:14.500000000000014px;background:#efefef;"></div>
<div class="fld" style="left:679px;top:124.3px;width:56.5px;height:14.500000000000014px;background:#efefef;"></div>
<div class="fld" style="left:739px;top:124.3px;width:62px;height:14.500000000000014px;background:#efefef;"></div>
<span class="t" style="top:160.2px;font-size:9px;line-height:14px;color:#000;-webkit-text-stroke:.12px;left:57px;transform-origin:0 50%;transform:scaleX(0.823);">Status</span>
<div style="left:107px;top:159.7px;width:56.3px;height:13.5px;background:#ffffd2;border-top:1px solid #c0c0c0;border-left:1px solid #c8c8c8;"></div>
<span class="t" style="top:160.0px;font-size:9px;line-height:14px;color:#000;-webkit-text-stroke:.12px;left:111.3px;transform-origin:0 50%;transform:scaleX(0.818);">Lieferung</span>
<svg style="left:165px;top:161px" width="14" height="14" viewBox="0 0 14 14"><g transform="translate(0.5,0)"><g transform="rotate(-38 6 6)"><rect x="1.300" y="3.900" width="8.600" height="4.200" rx=".9" fill="#f0b636" stroke="#c48a2c" stroke-width=".6"/><path d="M1.600 4.100L-.9 6l2.500 1.900z" fill="#e0a878" stroke="#c08850" stroke-width=".4"/><rect x="9.300" y="3.900" width="1.900" height="4.200" rx=".8" fill="#f6d09a" stroke="#c89a58" stroke-width=".4"/><path d="M2 5.300h7.300M2 6.700h7.300" stroke="#f8da80" stroke-width=".7"/></g></g></svg>
<span class="t" style="top:177.6px;font-size:9px;line-height:14px;color:#000;-webkit-text-stroke:.12px;left:57px;transform-origin:0 50%;transform:scaleX(0.8232);">Bestellung</span>
<div style="left:107px;top:177.5px;width:57px;height:14.099999999999994px;background:#fff;border:1px solid #8c8c8c;border-bottom-color:#8c8c8c;border-radius:2px;"></div>
<svg style="left:154.5px;top:183.35000000000002px" width="6" height="3.500" viewBox="0 0 6 3.500"><path d="M.300 .300L3 3 5.700 .300" stroke="#555" stroke-width=".8" fill="none"/></svg>
<span class="t" style="top:177.8px;font-size:9px;line-height:14px;color:#000;-webkit-text-stroke:.12px;left:109.5px;transform-origin:0 50%;transform:scaleX(0.8369);">21.05.2025</span>
<span class="t" style="top:194.9px;font-size:9px;line-height:14px;color:#000;-webkit-text-stroke:.12px;left:57px;transform-origin:0 50%;transform:scaleX(0.826);">Lieferung</span>
<div style="left:107px;top:194.8px;width:57px;height:14.5px;background:#fff;border:1px solid #8c8c8c;border-bottom-color:#8c8c8c;border-radius:2px;"></div>
<svg style="left:154.5px;top:200.85000000000002px" width="6" height="3.500" viewBox="0 0 6 3.500"><path d="M.300 .300L3 3 5.700 .300" stroke="#555" stroke-width=".8" fill="none"/></svg>
<span class="t" style="top:195.1px;font-size:9px;line-height:14px;color:#000;-webkit-text-stroke:.12px;left:109.5px;transform-origin:0 50%;transform:scaleX(0.8369);">05.06.2025</span>
<span class="t" style="top:212.7px;font-size:9px;line-height:14px;color:#000;-webkit-text-stroke:.12px;left:57px;transform-origin:0 50%;transform:scaleX(0.8527);">Rechnung</span>
<div style="left:107px;top:212.2px;width:57px;height:14.5px;background:#fff;border:1px solid #8c8c8c;border-bottom-color:#8c8c8c;border-radius:2px;"></div>
<svg style="left:154.5px;top:218.25px" width="6" height="3.500" viewBox="0 0 6 3.500"><path d="M.300 .300L3 3 5.700 .300" stroke="#555" stroke-width=".8" fill="none"/></svg>
<span class="t" style="top:212.9px;font-size:9px;line-height:14px;color:#000;-webkit-text-stroke:.12px;left:109.5px;transform-origin:0 50%;transform:scaleX(0.8369);">21.05.2025</span>
<span class="t" style="top:177.6px;font-size:9.5px;line-height:14px;color:#000;-webkit-text-stroke:.12px;left:167.6px;transform-origin:0 50%;transform:scaleX(0.7009);">+1</span>
<div style="left:178.5px;top:177.1px;width:14.5px;height:13.6px;background:#cce4f7;border:1px solid #c0dcf4;border-radius:1.500px;"></div>
<span class="t" style="top:177.6px;font-size:9px;line-height:14px;color:#fff;-webkit-text-stroke:.12px;left:35.80000000000001px;width:300px;text-align:center;transform-origin:50% 50%;transform:scaleX(0.8972);">0</span>
<span class="t" style="top:194.9px;font-size:9.5px;line-height:14px;color:#000;-webkit-text-stroke:.12px;left:167.6px;transform-origin:0 50%;transform:scaleX(0.7009);">+1</span>
<div style="left:178.5px;top:194.4px;width:14.5px;height:13.6px;background:#cce4f7;border:1px solid #c0dcf4;border-radius:1.500px;"></div>
<span class="t" style="top:194.9px;font-size:9px;line-height:14px;color:#fff;-webkit-text-stroke:.12px;left:35.80000000000001px;width:300px;text-align:center;transform-origin:50% 50%;transform:scaleX(0.8972);">0</span>
<svg style="left:164px;top:213px" width="14" height="14" viewBox="0 0 14 14"><g transform="translate(0.5,0)"><path d="M1.500 2.500l2-1.500M10.500 2.500l-2-1.500" stroke="#e0a020" stroke-width="1.600"/><circle cx="6" cy="6.500" r="4.800" fill="#3a8ad8" stroke="#2a6ab0" stroke-width=".7"/><circle cx="6" cy="6.500" r="3.300" fill="#eef6ff"/><path d="M6 4.300v2.400l1.700.9" stroke="#2a5a9a" stroke-width=".9" fill="none"/><path d="M2.500 11.500l1-1M9.500 11.500l-1-1" stroke="#c88a20" stroke-width="1"/></g></svg>
<span class="t" style="top:230.0px;font-size:9px;line-height:14px;color:#000;-webkit-text-stroke:.12px;left:57px;transform-origin:0 50%;transform:scaleX(0.8458);">Ware Absolut</span>
<div class="fld" style="left:107px;top:230px;width:56.5px;height:13.5px;background:#efefef;"></div>
<span class="t" style="top:230.0px;font-size:9px;line-height:14px;color:#000;-webkit-text-stroke:.12px;right:639.3px;transform-origin:100% 50%;transform:scaleX(0.8474);">495,34 €</span>
<span class="t" style="top:247.5px;font-size:9px;line-height:14px;color:#000;-webkit-text-stroke:.12px;left:57px;transform-origin:0 50%;transform:scaleX(0.8669);">Rabatt</span>
<div class="fld" style="left:107px;top:247.5px;width:56.5px;height:13.5px;background:#efefef;"></div>
<span class="t" style="top:247.5px;font-size:9px;line-height:14px;color:#000;-webkit-text-stroke:.12px;right:639.3px;transform-origin:100% 50%;transform:scaleX(0.839);">0,00 €</span>
<span class="t" style="top:265.4px;font-size:9px;line-height:14px;color:#000;-webkit-text-stroke:.12px;left:57px;transform-origin:0 50%;transform:scaleX(0.8562);">Skonto</span>
<div style="left:107.5px;top:265.3px;width:55.8px;height:13.5px;background:#ffff00;"></div>
<span class="t" style="top:265.4px;font-size:9px;line-height:14px;color:#000;-webkit-text-stroke:.12px;right:639.3px;transform-origin:100% 50%;transform:scaleX(0.839);">0,00 €</span>
<span class="t" style="top:283.0px;font-size:9.5px;line-height:14px;color:#000;font-weight:bold;-webkit-text-stroke:.22px;left:57px;transform-origin:0 50%;transform:scaleX(0.9238);">Ware Netto</span>
<div class="fld" style="left:107px;top:282.6px;width:56.5px;height:13.699999999999989px;background:#efefef;"></div>
<span class="t" style="top:283.0px;font-size:9px;line-height:14px;color:#000;-webkit-text-stroke:.12px;right:639.3px;transform-origin:100% 50%;transform:scaleX(0.8474);">495,34 €</span>
<span class="t" style="top:300.5px;font-size:9.5px;line-height:14px;color:#000;font-weight:bold;-webkit-text-stroke:.22px;left:57px;transform-origin:0 50%;transform:scaleX(0.9004);">Pfand Netto</span>
<div style="left:107.5px;top:300.4px;width:55.8px;height:13.300000000000011px;background:#ffff00;"></div>
<span class="t" style="top:300.5px;font-size:9px;line-height:14px;color:#000;-webkit-text-stroke:.12px;right:639.3px;transform-origin:100% 50%;transform:scaleX(0.8474);">299,78 €</span>
<span class="t" style="top:318.4px;font-size:9.5px;line-height:14px;color:#000;font-weight:bold;-webkit-text-stroke:.22px;left:57px;transform-origin:0 50%;transform:scaleX(0.8491);">Gesamt</span>
<div class="fld" style="left:107px;top:317.9px;width:56.5px;height:13.600000000000023px;background:#efefef;"></div>
<span class="t" style="top:318.4px;font-size:9px;line-height:14px;color:#000;-webkit-text-stroke:.12px;right:639.3px;transform-origin:100% 50%;transform:scaleX(0.8474);">795,12 €</span>
<span class="t" style="top:335.6px;font-size:9px;line-height:14px;color:#000;-webkit-text-stroke:.12px;left:57px;transform-origin:0 50%;transform:scaleX(0.8411);">Brutto</span>
<div class="fld" style="left:107px;top:335.3px;width:56.5px;height:13.5px;background:#efefef;"></div>
<span class="t" style="top:335.6px;font-size:9px;line-height:14px;color:#000;-webkit-text-stroke:.12px;right:639.3px;transform-origin:100% 50%;transform:scaleX(0.8474);">889,23 €</span>
<span class="t" style="top:230.0px;font-size:9px;line-height:14px;color:#333;-webkit-text-stroke:.12px;left:167.8px;transform-origin:0 50%;transform:scaleX(0.7132);">&gt;&gt;</span>
<svg style="left:165px;top:248px" width="14" height="14" viewBox="0 0 14 14"><g transform="translate(0.5,0.5)"><g transform="rotate(-38 6 6)"><rect x="1.300" y="3.900" width="8.600" height="4.200" rx=".9" fill="#f0b636" stroke="#c48a2c" stroke-width=".6"/><path d="M1.600 4.100L-.9 6l2.500 1.900z" fill="#e0a878" stroke="#c08850" stroke-width=".4"/><rect x="9.300" y="3.900" width="1.900" height="4.200" rx=".8" fill="#f6d09a" stroke="#c89a58" stroke-width=".4"/><path d="M2 5.300h7.300M2 6.700h7.300" stroke="#f8da80" stroke-width=".7"/></g></g></svg>
<svg style="left:165px;top:266px" width="14" height="14" viewBox="0 0 14 14"><g transform="translate(0.5,0)"><g transform="rotate(-38 6 6)"><rect x="1.300" y="3.900" width="8.600" height="4.200" rx=".9" fill="#f0b636" stroke="#c48a2c" stroke-width=".6"/><path d="M1.600 4.100L-.9 6l2.500 1.900z" fill="#e0a878" stroke="#c08850" stroke-width=".4"/><rect x="9.300" y="3.900" width="1.900" height="4.200" rx=".8" fill="#f6d09a" stroke="#c89a58" stroke-width=".4"/><path d="M2 5.300h7.300M2 6.700h7.300" stroke="#f8da80" stroke-width=".7"/></g></g></svg>
<svg style="left:166px;top:284px" width="14" height="14" viewBox="0 0 14 14"><g transform="translate(0,0)"><circle cx="6" cy="2" r="1.600" fill="#d8a060"/><path d="M3.800 7V4.800q0-1.300 2.200-1.300t2.200 1.300V7z" fill="#c88a50"/><circle cx="2.500" cy="5.500" r="1.500" fill="#4a80c8"/><path d="M.500 11.500V8.500q0-1.300 2-1.300t2 1.300v3z" fill="#3a70c0"/><circle cx="6" cy="5.800" r="1.500" fill="#d8a060"/><path d="M4.200 11.500V8.700q0-1.300 1.800-1.300t1.800 1.300v2.800z" fill="#d09050"/><circle cx="9.500" cy="5.500" r="1.500" fill="#d8a060"/><path d="M7.700 11.500V8.500q0-1.300 1.900-1.300t1.900 1.300v3z" fill="#c88a50"/></g></svg>
<svg style="left:180px;top:284px" width="14" height="14" viewBox="0 0 14 14"><g transform="translate(0.3,0)"><rect x=".500" y="4.500" width="3.500" height="6.500" fill="#e84a5a"/><rect x="4.200" y="1" width="3.500" height="10" fill="#3a6ad0"/><rect x="8" y="6" width="3.500" height="5" fill="#4aa85a"/><path d="M0 11.300h12" stroke="#888" stroke-width=".6"/></g></svg>
<svg style="left:166px;top:300px" width="14" height="14" viewBox="0 0 14 14"><g transform="translate(0,0.6)"><text x="-.2" y="11.200" font-family="Liberation Sans" font-size="8.500" font-weight="bold" fill="#161616" stroke="#161616" stroke-width=".3" textLength="12" lengthAdjust="spacingAndGlyphs">aBB</text><path d="M4.600 4.300h2.800M8.400 4.300H11.400" stroke="#222" stroke-width="1.100"/></g></svg>
<svg style="left:180px;top:301px" width="14" height="14" viewBox="0 0 14 14"><g transform="translate(0.3,0.5)"><rect x=".500" y="4.500" width="3.500" height="6.500" fill="#e84a5a"/><rect x="4.200" y="1" width="3.500" height="10" fill="#3a6ad0"/><rect x="8" y="6" width="3.500" height="5" fill="#4aa85a"/><path d="M0 11.300h12" stroke="#888" stroke-width=".6"/></g></svg>
<svg style="left:166px;top:318px" width="14" height="14" viewBox="0 0 14 14"><g transform="translate(0,0.4)"><circle cx="6" cy="6" r="5" fill="#4c7cba" stroke="#3a66a4" stroke-width=".8"/><circle cx="6" cy="6" r="3.900" fill="#5c8ac6" stroke="#a4c0e4" stroke-width=".5"/><rect x="5.400" y="5" width="1.200" height="3.800" fill="#f4f8ff"/><circle cx="6" cy="3.500" r=".8" fill="#f4f8ff"/></g></svg>
<svg style="left:165px;top:336px" width="14" height="14" viewBox="0 0 14 14"><g transform="translate(0.5,0.5)"><g stroke="#c8901a" stroke-width=".45"><ellipse cx="3.200" cy="10" rx="2.900" ry="1.400" fill="#e8ac20"/><ellipse cx="3.200" cy="8.600" rx="2.900" ry="1.400" fill="#f2bc30"/><ellipse cx="3.200" cy="7.200" rx="2.900" ry="1.400" fill="#f8cc48"/><ellipse cx="6.600" cy="9.600" rx="2.900" ry="1.400" fill="#e8ac20"/><ellipse cx="6.600" cy="8" rx="2.900" ry="1.400" fill="#f0b828"/><ellipse cx="6.600" cy="6.400" rx="2.900" ry="1.400" fill="#f2bc30"/><ellipse cx="6.600" cy="4.800" rx="2.900" ry="1.400" fill="#f4c238"/><ellipse cx="6.600" cy="3.200" rx="2.900" ry="1.400" fill="#f8cc48"/><ellipse cx="6.600" cy="1.800" rx="2.900" ry="1.400" fill="#fcdc70"/><ellipse cx="9.600" cy="10.200" rx="2.300" ry="1.500" fill="#f2bc30"/><ellipse cx="9.600" cy="9.300" rx="2.300" ry="1.400" fill="#f8d058"/></g></g></svg>
<span class="t" style="top:354.3px;font-size:9px;line-height:14px;color:#000;-webkit-text-stroke:.12px;left:57px;transform-origin:0 50%;transform:scaleX(0.8459);">Pfand berechnen</span>
<div style="left:155px;top:356.2px;width:9.5px;height:9.5px;background:#0a64c8;border:1px solid #0a5ab8;border-radius:2.500px;"><svg style="left:0;top:0" width="7.500" height="7.500" viewBox="0 0 7.500 7.500"><path d="M1.600 3.800l1.600 1.600 2.900-3.200" stroke="#fff" stroke-width=".9" fill="none"/></svg></div>
<span class="t" style="top:371.7px;font-size:9px;line-height:14px;color:#000;-webkit-text-stroke:.12px;left:57px;transform-origin:0 50%;transform:scaleX(0.8312);">Lieferschein rückerfasst</span>
<div style="left:155px;top:373.8px;width:9.5px;height:9.5px;background:#fbfbfb;border:1px solid #767676;border-radius:2.500px;"></div>
<span class="t" style="top:389.0px;font-size:9px;line-height:14px;color:#000;-webkit-text-stroke:.12px;left:57px;transform-origin:0 50%;transform:scaleX(0.8372);">Für Autodruck vormerken</span>
<div style="left:155px;top:391.3px;width:9.5px;height:9.5px;background:#fbfbfb;border:1px solid #767676;border-radius:2.500px;"></div>
<svg style="left:166px;top:390px" width="14" height="14" viewBox="0 0 14 14"><g transform="translate(0,0.3)"><rect x=".600" y=".800" width="10" height="9.700" fill="#e9f1e6" stroke="#6a9ee0" stroke-width=".9"/><rect x=".600" y=".800" width="10" height="2.600" fill="#9cc4f0"/><path d="M4 3.400v7M7.300 3.400v7" stroke="#a4c6ec" stroke-width=".8"/></g></svg>
<svg style="left:165px;top:406px" width="14" height="14" viewBox="0 0 14 14"><g transform="translate(0.5,0.5)"><g transform="rotate(-38 6 6)"><rect x="1.300" y="3.900" width="8.600" height="4.200" rx=".9" fill="#f0b636" stroke="#c48a2c" stroke-width=".6"/><path d="M1.600 4.100L-.9 6l2.500 1.900z" fill="#e0a878" stroke="#c08850" stroke-width=".4"/><rect x="9.300" y="3.900" width="1.900" height="4.200" rx=".8" fill="#f6d09a" stroke="#c89a58" stroke-width=".4"/><path d="M2 5.300h7.300M2 6.700h7.300" stroke="#f8da80" stroke-width=".7"/></g></g></svg>
<span class="t" style="top:423.7px;font-size:9px;line-height:14px;color:#000;-webkit-text-stroke:.12px;left:57px;transform-origin:0 50%;transform:scaleX(0.8328);">Teillieferung</span>
<div style="left:104.4px;top:423.7px;width:59.099999999999994px;height:13.5px;background:#fff;border:1px solid #d8d8d8;border-bottom-color:#c0c0c0;border-radius:2px;"></div>
<svg style="left:154.0px;top:429.25px" width="6" height="3.500" viewBox="0 0 6 3.500"><path d="M.300 .300L3 3 5.700 .300" stroke="#555" stroke-width=".8" fill="none"/></svg>
<span class="t" style="top:423.7px;font-size:9px;line-height:14px;color:#000;-webkit-text-stroke:.12px;left:106.8px;transform-origin:0 50%;transform:scaleX(0.8214);">Lieferung 4</span>
<svg style="left:166px;top:424px" width="14" height="14" viewBox="0 0 14 14"><g transform="translate(0,0.5)"><rect x=".600" y=".800" width="10" height="9.700" fill="#e9f1e6" stroke="#6a9ee0" stroke-width=".9"/><rect x=".600" y=".800" width="10" height="2.600" fill="#9cc4f0"/><path d="M4 3.400v7M7.300 3.400v7" stroke="#a4c6ec" stroke-width=".8"/></g></svg>
<div style="left:195.5px;top:145.5px;width:375.5px;height:183.8px;background:#fff;border:1px solid #b4b4b4;border-top-color:#a8a8a8;box-shadow:0 0 0 1px #f8f8f8;"></div>
<div style="left:196.5px;top:159.8px;width:373.5px;height:1px;background:#cfcfcf;"></div>
<span class="t" style="top:146.1px;font-size:9.5px;line-height:14px;color:#000;font-weight:bold;-webkit-text-stroke:.22px;left:233.3px;width:300px;text-align:center;transform-origin:50% 50%;transform:scaleX(0.9041);">Ware (3 Posten)</span>
<svg style="left:540px;top:147px" width="14" height="14" viewBox="0 0 14 14"><g transform="translate(0.5,0.8)"><rect x=".700" y=".800" width="9.800" height="9.800" rx=".8" fill="#f4f8fc" stroke="#9ab8dc" stroke-width=".9"/><rect x=".700" y=".800" width="9.800" height="2" fill="#c0d8f0"/><rect x="8" y=".500" width="2" height="1.300" fill="#e86a6a"/><path d="M2.300 4.800h6.600M2.300 6.500h6.600M2.300 8.200h6.600" stroke="#d8e0e8" stroke-width=".6"/></g></svg>
<svg style="left:557px;top:147px" width="14" height="14" viewBox="0 0 14 14"><g transform="translate(0.8,0.8)"><circle cx="6" cy="2" r="1.600" fill="#d8a060"/><path d="M3.800 7V4.800q0-1.300 2.200-1.300t2.200 1.300V7z" fill="#c88a50"/><circle cx="2.500" cy="5.500" r="1.500" fill="#4a80c8"/><path d="M.500 11.500V8.500q0-1.300 2-1.300t2 1.300v3z" fill="#3a70c0"/><circle cx="6" cy="5.800" r="1.500" fill="#d8a060"/><path d="M4.200 11.500V8.700q0-1.300 1.800-1.300t1.800 1.300v2.800z" fill="#d09050"/><circle cx="9.500" cy="5.500" r="1.500" fill="#d8a060"/><path d="M7.700 11.500V8.500q0-1.300 1.900-1.300t1.900 1.300v3z" fill="#c88a50"/></g></svg>
<div style="left:558.8px;top:160.8px;width:11.2px;height:167.5px;background:#f0f0f0;"></div>
<div style="left:563.3px;top:239.2px;width:1.4px;height:11.5px;background:#7a7a7a;"></div>
<div style="left:196.4px;top:161.2px;width:8.199999999999989px;height:12.800000000000011px;background:#ececec;border-right:1.500px solid #3a3a3a;border-bottom:1.800px solid #3a3a3a;border-top:1px solid #fafafa;border-left:1px solid #fafafa;"></div>
<div style="left:204.6px;top:161.2px;width:36.0px;height:12.800000000000011px;background:#ececec;border-right:1.500px solid #3a3a3a;border-bottom:1.800px solid #3a3a3a;border-top:1px solid #fafafa;border-left:1px solid #fafafa;"></div>
<span class="t" style="top:160.3px;font-size:9px;line-height:14px;color:#111;-webkit-text-stroke:.12px;left:206.79999999999998px;transform-origin:0 50%;transform:scaleX(0.8073);">Art.Nr.</span>
<div style="left:240.6px;top:161.2px;width:106.00000000000003px;height:12.800000000000011px;background:#ececec;border-right:1.500px solid #3a3a3a;border-bottom:1.800px solid #3a3a3a;border-top:1px solid #fafafa;border-left:1px solid #fafafa;"></div>
<span class="t" style="top:160.3px;font-size:9px;line-height:14px;color:#111;-webkit-text-stroke:.12px;left:242.79999999999998px;transform-origin:0 50%;transform:scaleX(0.8185);">Bezeichnung</span>
<div style="left:346.6px;top:161.2px;width:18.0px;height:12.800000000000011px;background:#ececec;border-right:1.500px solid #3a3a3a;border-bottom:1.800px solid #3a3a3a;border-top:1px solid #fafafa;border-left:1px solid #fafafa;"></div>
<span class="t" style="top:160.3px;font-size:9px;line-height:14px;color:#111;-webkit-text-stroke:.12px;left:348.8px;transform-origin:0 50%;transform:scaleX(0.7771);">Anz.</span>
<div style="left:364.6px;top:161.2px;width:35.799999999999955px;height:12.800000000000011px;background:#ececec;border-right:1.500px solid #3a3a3a;border-bottom:1.800px solid #3a3a3a;border-top:1px solid #fafafa;border-left:1px solid #fafafa;"></div>
<span class="t" style="top:160.3px;font-size:9px;line-height:14px;color:#111;-webkit-text-stroke:.12px;left:366.8px;transform-origin:0 50%;transform:scaleX(0.7604);">Preis</span>
<div style="left:400.4px;top:161.2px;width:54.0px;height:12.800000000000011px;background:#ececec;border-right:1.500px solid #3a3a3a;border-bottom:1.800px solid #3a3a3a;border-top:1px solid #fafafa;border-left:1px solid #fafafa;"></div>
<span class="t" style="top:160.3px;font-size:9px;line-height:14px;color:#111;-webkit-text-stroke:.12px;left:402.59999999999997px;transform-origin:0 50%;transform:scaleX(0.7738);">Summe</span>
<div style="left:204.6px;top:174.0px;width:249.79999999999998px;height:12.53px;background:#e4ffe4;border-bottom:1px solid #d4d4d4;"></div>
<div style="left:196.4px;top:174.0px;width:8.199999999999989px;height:12.53px;background:#ececec;border-right:1.500px solid #3a3a3a;border-bottom:1.500px solid #3a3a3a;border-top:1px solid #fafafa;"></div>
<svg style="left:199.20000000000002px;top:176.6px" width="4.200" height="7.400" viewBox="0 0 4.200 7.400"><path d="M0 0L4.200 3.700 0 7.400z" fill="#000"/></svg>
<div style="left:239.6px;top:174.0px;width:1px;height:12.53px;background:#d0d0d0;"></div>
<span class="t" style="top:173.16px;font-size:9px;line-height:14px;color:#000;-webkit-text-stroke:.12px;left:207.0px;transform-origin:0 50%;transform:scaleX(0.8381);">11024131</span>
<div style="left:345.6px;top:174.0px;width:1px;height:12.53px;background:#d0d0d0;"></div>
<span class="t" style="top:173.16px;font-size:9px;line-height:14px;color:#000;-webkit-text-stroke:.12px;left:243.0px;transform-origin:0 50%;transform:scaleX(0.829);">Becks Pils Kasten 12x0,50l</span>
<div style="left:363.6px;top:174.0px;width:1px;height:12.53px;background:#d0d0d0;"></div>
<span class="t" style="top:173.16px;font-size:9px;line-height:14px;color:#000;-webkit-text-stroke:.12px;right:437.6px;transform-origin:100% 50%;transform:scaleX(0.8972);">6</span>
<div style="left:399.4px;top:174.0px;width:1px;height:12.53px;background:#d0d0d0;"></div>
<span class="t" style="top:173.16px;font-size:9px;line-height:14px;color:#000;-webkit-text-stroke:.12px;right:401.8px;transform-origin:100% 50%;transform:scaleX(0.8511);">11,31 €</span>
<div style="left:453.4px;top:174.0px;width:1px;height:12.53px;background:#d0d0d0;"></div>
<span class="t" style="top:173.16px;font-size:9px;line-height:14px;color:#000;-webkit-text-stroke:.12px;right:347.8px;transform-origin:100% 50%;transform:scaleX(0.8524);">67,87 €</span>
<div style="left:204.6px;top:186.53px;width:249.79999999999998px;height:12.53px;background:#fff;border-bottom:1px solid #d4d4d4;"></div>
<div style="left:196.4px;top:186.53px;width:8.199999999999989px;height:12.53px;background:#ececec;border-right:1.500px solid #3a3a3a;border-bottom:1.500px solid #3a3a3a;border-top:1px solid #fafafa;"></div>
<div style="left:239.6px;top:186.53px;width:1px;height:12.53px;background:#d0d0d0;"></div>
<span class="t" style="top:185.7px;font-size:9px;line-height:14px;color:#000;-webkit-text-stroke:.12px;left:207.0px;transform-origin:0 50%;transform:scaleX(0.8523);">11106162</span>
<div style="left:345.6px;top:186.53px;width:1px;height:12.53px;background:#d0d0d0;"></div>
<span class="t" style="top:185.7px;font-size:9px;line-height:14px;color:#000;-webkit-text-stroke:.12px;left:243.0px;transform-origin:0 50%;transform:scaleX(0.8332);">Warsteiner Radler alkoholfrei K</span>
<div style="left:363.6px;top:186.53px;width:1px;height:12.53px;background:#d0d0d0;"></div>
<span class="t" style="top:185.7px;font-size:9px;line-height:14px;color:#000;-webkit-text-stroke:.12px;right:437.6px;transform-origin:100% 50%;transform:scaleX(0.8972);">3</span>
<div style="left:399.4px;top:186.53px;width:1px;height:12.53px;background:#d0d0d0;"></div>
<span class="t" style="top:185.7px;font-size:9px;line-height:14px;color:#000;-webkit-text-stroke:.12px;right:401.8px;transform-origin:100% 50%;transform:scaleX(0.8325);">16,83 €</span>
<div style="left:453.4px;top:186.53px;width:1px;height:12.53px;background:#d0d0d0;"></div>
<span class="t" style="top:185.7px;font-size:9px;line-height:14px;color:#000;-webkit-text-stroke:.12px;right:347.8px;transform-origin:100% 50%;transform:scaleX(0.8524);">50,50 €</span>
<div style="left:204.6px;top:199.06px;width:249.79999999999998px;height:12.53px;background:#e4ffe4;border-bottom:1px solid #d4d4d4;"></div>
<div style="left:196.4px;top:199.06px;width:8.199999999999989px;height:12.53px;background:#ececec;border-right:1.500px solid #3a3a3a;border-bottom:1.500px solid #3a3a3a;border-top:1px solid #fafafa;"></div>
<div style="left:239.6px;top:199.06px;width:1px;height:12.53px;background:#d0d0d0;"></div>
<span class="t" style="top:198.22px;font-size:9px;line-height:14px;color:#000;-webkit-text-stroke:.12px;left:207.0px;transform-origin:0 50%;transform:scaleX(0.8523);">11106143</span>
<div style="left:345.6px;top:199.06px;width:1px;height:12.53px;background:#d0d0d0;"></div>
<span class="t" style="top:198.22px;font-size:9px;line-height:14px;color:#000;-webkit-text-stroke:.12px;left:243.0px;transform-origin:0 50%;transform:scaleX(0.8128);">Warsteiner Pils Fass 30l</span>
<div style="left:363.6px;top:199.06px;width:1px;height:12.53px;background:#d0d0d0;"></div>
<span class="t" style="top:198.22px;font-size:9px;line-height:14px;color:#000;-webkit-text-stroke:.12px;right:437.6px;transform-origin:100% 50%;transform:scaleX(0.8972);">2</span>
<div style="left:399.4px;top:199.06px;width:1px;height:12.53px;background:#d0d0d0;"></div>
<span class="t" style="top:198.22px;font-size:9px;line-height:14px;color:#000;-webkit-text-stroke:.12px;right:401.8px;transform-origin:100% 50%;transform:scaleX(0.8325);">59,76 €</span>
<div style="left:453.4px;top:199.06px;width:1px;height:12.53px;background:#d0d0d0;"></div>
<span class="t" style="top:198.22px;font-size:9px;line-height:14px;color:#000;-webkit-text-stroke:.12px;right:347.8px;transform-origin:100% 50%;transform:scaleX(0.8611);">119,53 €</span>
<div style="left:573px;top:145.5px;width:228px;height:183.8px;background:#fff;border:1px solid #b4b4b4;border-top-color:#a8a8a8;box-shadow:0 0 0 1px #f8f8f8;"></div>
<div style="left:574px;top:159.8px;width:226px;height:1px;background:#cfcfcf;"></div>
<span class="t" style="top:146.1px;font-size:9.5px;line-height:14px;color:#000;font-weight:bold;-webkit-text-stroke:.22px;left:535.5px;width:300px;text-align:center;transform-origin:50% 50%;transform:scaleX(0.8872);">Pfand (3 Posten)</span>
<svg style="left:767px;top:147px" width="14" height="14" viewBox="0 0 14 14"><g transform="translate(0,0.8)"><rect x=".700" y=".800" width="9.800" height="9.800" rx=".8" fill="#f4f8fc" stroke="#9ab8dc" stroke-width=".9"/><rect x=".700" y=".800" width="9.800" height="2" fill="#c0d8f0"/><rect x="8" y=".500" width="2" height="1.300" fill="#e86a6a"/><path d="M2.300 4.800h6.600M2.300 6.500h6.600M2.300 8.200h6.600" stroke="#d8e0e8" stroke-width=".6"/></g></svg>
<svg style="left:784px;top:147px" width="14" height="14" viewBox="0 0 14 14"><g transform="translate(0.8,0.8)"><text x="-.2" y="11.200" font-family="Liberation Sans" font-size="8.500" font-weight="bold" fill="#161616" stroke="#161616" stroke-width=".3" textLength="12" lengthAdjust="spacingAndGlyphs">aBB</text><path d="M4.600 4.300h2.800M8.400 4.300H11.400" stroke="#222" stroke-width="1.100"/></g></svg>
<div style="left:574.4px;top:161.2px;width:8.200000000000045px;height:12.800000000000011px;background:#ececec;border-right:1.500px solid #3a3a3a;border-bottom:1.800px solid #3a3a3a;border-top:1px solid #fafafa;border-left:1px solid #fafafa;"></div>
<div style="left:582.6px;top:161.2px;width:35.799999999999955px;height:12.800000000000011px;background:#ececec;border-right:1.500px solid #3a3a3a;border-bottom:1.800px solid #3a3a3a;border-top:1px solid #fafafa;border-left:1px solid #fafafa;"></div>
<span class="t" style="top:160.3px;font-size:9px;line-height:14px;color:#111;-webkit-text-stroke:.12px;left:584.8000000000001px;transform-origin:0 50%;transform:scaleX(0.7994);">Pf.Nr.</span>
<div style="left:618.4px;top:161.2px;width:71.30000000000007px;height:12.800000000000011px;background:#ececec;border-right:1.500px solid #3a3a3a;border-bottom:1.800px solid #3a3a3a;border-top:1px solid #fafafa;border-left:1px solid #fafafa;"></div>
<span class="t" style="top:160.3px;font-size:9px;line-height:14px;color:#111;-webkit-text-stroke:.12px;left:620.6px;transform-origin:0 50%;transform:scaleX(0.8274);">Suchbgr.</span>
<div style="left:689.7px;top:161.2px;width:17.699999999999932px;height:12.800000000000011px;background:#ececec;border-right:1.500px solid #3a3a3a;border-bottom:1.800px solid #3a3a3a;border-top:1px solid #fafafa;border-left:1px solid #fafafa;"></div>
<span class="t" style="top:160.3px;font-size:9px;line-height:14px;color:#111;-webkit-text-stroke:.12px;left:691.9000000000001px;transform-origin:0 50%;transform:scaleX(0.7493);">Anz.</span>
<div style="left:707.4px;top:161.2px;width:36.0px;height:12.800000000000011px;background:#ececec;border-right:1.500px solid #3a3a3a;border-bottom:1.800px solid #3a3a3a;border-top:1px solid #fafafa;border-left:1px solid #fafafa;"></div>
<span class="t" style="top:160.3px;font-size:9px;line-height:14px;color:#111;-webkit-text-stroke:.12px;left:709.6px;transform-origin:0 50%;transform:scaleX(0.7799);">Preis</span>
<div style="left:743.4px;top:161.2px;width:56.60000000000002px;height:12.800000000000011px;background:#ececec;border-right:1.500px solid #3a3a3a;border-bottom:1.800px solid #3a3a3a;border-top:1px solid #fafafa;border-left:1px solid #fafafa;"></div>
<span class="t" style="top:160.3px;font-size:9px;line-height:14px;color:#111;-webkit-text-stroke:.12px;left:745.6px;transform-origin:0 50%;transform:scaleX(0.7899);">Summe</span>
<div style="left:582.6px;top:174.0px;width:217.39999999999998px;height:12.53px;background:#ffe6dc;border-bottom:1px solid #d4d4d4;"></div>
<div style="left:574.4px;top:174.0px;width:8.200000000000045px;height:12.53px;background:#ececec;border-right:1.500px solid #3a3a3a;border-bottom:1.500px solid #3a3a3a;border-top:1px solid #fafafa;"></div>
<svg style="left:577.1999999999999px;top:176.6px" width="4.200" height="7.400" viewBox="0 0 4.200 7.400"><path d="M0 0L4.200 3.700 0 7.400z" fill="#000"/></svg>
<div style="left:617.4px;top:174.0px;width:1px;height:12.53px;background:#d0d0d0;"></div>
<span class="t" style="top:173.16px;font-size:9px;line-height:14px;color:#000;-webkit-text-stroke:.12px;left:585.0px;transform-origin:0 50%;transform:scaleX(0.8357);">112</span>
<div style="left:688.7px;top:174.0px;width:1px;height:12.53px;background:#d0d0d0;"></div>
<span class="t" style="top:173.16px;font-size:9px;line-height:14px;color:#000;-webkit-text-stroke:.12px;left:620.8px;transform-origin:0 50%;transform:scaleX(0.8324);">Kasten 12x 0,08 €</span>
<div style="left:706.4px;top:174.0px;width:1px;height:12.53px;background:#d0d0d0;"></div>
<span class="t" style="top:173.16px;font-size:9px;line-height:14px;color:#000;-webkit-text-stroke:.12px;right:94.8px;transform-origin:100% 50%;transform:scaleX(0.8972);">6</span>
<div style="left:742.4px;top:174.0px;width:1px;height:12.53px;background:#d0d0d0;"></div>
<span class="t" style="top:173.16px;font-size:9px;line-height:14px;color:#000;-webkit-text-stroke:.12px;right:58.8px;transform-origin:100% 50%;transform:scaleX(0.8509);">2,46 €</span>
<div style="left:799px;top:174.0px;width:1px;height:12.53px;background:#d0d0d0;"></div>
<div style="left:582.6px;top:186.53px;width:217.39999999999998px;height:12.53px;background:#fff;border-bottom:1px solid #d4d4d4;"></div>
<div style="left:574.4px;top:186.53px;width:8.200000000000045px;height:12.53px;background:#ececec;border-right:1.500px solid #3a3a3a;border-bottom:1.500px solid #3a3a3a;border-top:1px solid #fafafa;"></div>
<div style="left:617.4px;top:186.53px;width:1px;height:12.53px;background:#d0d0d0;"></div>
<span class="t" style="top:185.7px;font-size:9px;line-height:14px;color:#000;-webkit-text-stroke:.12px;left:585.0px;transform-origin:0 50%;transform:scaleX(0.7983);">124</span>
<div style="left:688.7px;top:186.53px;width:1px;height:12.53px;background:#d0d0d0;"></div>
<span class="t" style="top:185.7px;font-size:9px;line-height:14px;color:#000;-webkit-text-stroke:.12px;left:620.8px;transform-origin:0 50%;transform:scaleX(0.8324);">Kasten 24x 0,08 €</span>
<div style="left:706.4px;top:186.53px;width:1px;height:12.53px;background:#d0d0d0;"></div>
<span class="t" style="top:185.7px;font-size:9px;line-height:14px;color:#000;-webkit-text-stroke:.12px;right:94.8px;transform-origin:100% 50%;transform:scaleX(0.8972);">3</span>
<div style="left:742.4px;top:186.53px;width:1px;height:12.53px;background:#d0d0d0;"></div>
<span class="t" style="top:185.7px;font-size:9px;line-height:14px;color:#000;-webkit-text-stroke:.12px;right:58.8px;transform-origin:100% 50%;transform:scaleX(0.8509);">3,42 €</span>
<div style="left:799px;top:186.53px;width:1px;height:12.53px;background:#d0d0d0;"></div>
<div style="left:582.6px;top:199.06px;width:217.39999999999998px;height:12.53px;background:#ffe6dc;border-bottom:1px solid #d4d4d4;"></div>
<div style="left:574.4px;top:199.06px;width:8.200000000000045px;height:12.53px;background:#ececec;border-right:1.500px solid #3a3a3a;border-bottom:1.500px solid #3a3a3a;border-top:1px solid #fafafa;"></div>
<div style="left:617.4px;top:199.06px;width:1px;height:12.53px;background:#d0d0d0;"></div>
<span class="t" style="top:198.22px;font-size:9px;line-height:14px;color:#000;-webkit-text-stroke:.12px;left:585.0px;transform-origin:0 50%;transform:scaleX(0.7983);">930</span>
<div style="left:688.7px;top:199.06px;width:1px;height:12.53px;background:#d0d0d0;"></div>
<span class="t" style="top:198.22px;font-size:9px;line-height:14px;color:#000;-webkit-text-stroke:.12px;left:620.8px;transform-origin:0 50%;transform:scaleX(0.8149);">Fass 30,00 €</span>
<div style="left:706.4px;top:199.06px;width:1px;height:12.53px;background:#d0d0d0;"></div>
<span class="t" style="top:198.22px;font-size:9px;line-height:14px;color:#000;-webkit-text-stroke:.12px;right:94.8px;transform-origin:100% 50%;transform:scaleX(0.8972);">2</span>
<div style="left:742.4px;top:199.06px;width:1px;height:12.53px;background:#d0d0d0;"></div>
<span class="t" style="top:198.22px;font-size:9px;line-height:14px;color:#000;-webkit-text-stroke:.12px;right:58.8px;transform-origin:100% 50%;transform:scaleX(0.8491);">30,00 €</span>
<div style="left:799px;top:199.06px;width:1px;height:12.53px;background:#d0d0d0;"></div>
<span class="t" style="top:173.2px;font-size:9px;line-height:14px;color:#000;-webkit-text-stroke:.12px;left:769.7px;transform-origin:0 50%;transform:scaleX(0.867);">14,7</span>
<span class="t" style="top:185.73px;font-size:9px;line-height:14px;color:#000;-webkit-text-stroke:.12px;left:769.7px;transform-origin:0 50%;transform:scaleX(0.867);">10,2</span>
<span class="t" style="top:198.26px;font-size:9px;line-height:14px;color:#000;-webkit-text-stroke:.12px;left:769.7px;transform-origin:0 50%;transform:scaleX(0.867);">60,0</span>
<div style="left:574px;top:316.8px;width:226px;height:11.7px;background:#f0f0f0;"></div>
<div style="left:586px;top:321.4px;width:12.5px;height:1.4px;background:#6a6a6a;"></div>
<div style="left:784.5px;top:160.5px;width:15.5px;height:157px;background:#f0f0f0;border-left:1px solid #dcdcdc;"></div>
<div style="left:789.8px;top:173.8px;width:1.8px;height:11.7px;background:#707070;"></div>
<div style="left:195.5px;top:332.3px;width:605.5px;height:108.0px;background:#fff;border:1px solid #b4b4b4;border-top-color:#a8a8a8;box-shadow:0 0 0 1px #f8f8f8;"></div>
<div style="left:196.5px;top:346.6px;width:603.5px;height:1px;background:#cfcfcf;"></div>
<span class="t" style="top:332.9px;font-size:9.5px;line-height:14px;color:#000;font-weight:bold;-webkit-text-stroke:.22px;left:346.2px;width:300px;text-align:center;transform-origin:50% 50%;transform:scaleX(0.856);">Vermietung</span>
<svg style="left:767px;top:334px" width="14" height="14" viewBox="0 0 14 14"><g transform="translate(0.5,0.6)"><rect x=".700" y=".800" width="9.800" height="9.800" rx=".8" fill="#f4f8fc" stroke="#9ab8dc" stroke-width=".9"/><rect x=".700" y=".800" width="9.800" height="2" fill="#c0d8f0"/><rect x="8" y=".500" width="2" height="1.300" fill="#e86a6a"/><path d="M2.300 4.800h6.600M2.300 6.500h6.600M2.300 8.200h6.600" stroke="#d8e0e8" stroke-width=".6"/></g></svg>
<svg style="left:785px;top:334px" width="14" height="14" viewBox="0 0 14 14"><g transform="translate(0,0.6)"><circle cx="6" cy="2" r="1.600" fill="#d8a060"/><path d="M3.800 7V4.800q0-1.300 2.200-1.300t2.200 1.300V7z" fill="#c88a50"/><circle cx="2.500" cy="5.500" r="1.500" fill="#4a80c8"/><path d="M.500 11.500V8.500q0-1.300 2-1.300t2 1.300v3z" fill="#3a70c0"/><circle cx="6" cy="5.800" r="1.500" fill="#d8a060"/><path d="M4.200 11.500V8.700q0-1.300 1.800-1.300t1.800 1.300v2.800z" fill="#d09050"/><circle cx="9.500" cy="5.500" r="1.500" fill="#d8a060"/><path d="M7.700 11.500V8.500q0-1.300 1.900-1.300t1.900 1.300v3z" fill="#c88a50"/></g></svg>
<div style="left:196.4px;top:347.7px;width:8.199999999999989px;height:12.800000000000011px;background:#ececec;border-right:1.500px solid #3a3a3a;border-bottom:1.800px solid #3a3a3a;border-top:1px solid #fafafa;border-left:1px solid #fafafa;"></div>
<div style="left:204.6px;top:347.7px;width:35.80000000000001px;height:12.800000000000011px;background:#ececec;border-right:1.500px solid #3a3a3a;border-bottom:1.800px solid #3a3a3a;border-top:1px solid #fafafa;border-left:1px solid #fafafa;"></div>
<span class="t" style="top:346.8px;font-size:9px;line-height:14px;color:#111;-webkit-text-stroke:.12px;left:206.79999999999998px;transform-origin:0 50%;transform:scaleX(0.8073);">Art.Nr.</span>
<div style="left:240.4px;top:347.7px;width:106.20000000000002px;height:12.800000000000011px;background:#ececec;border-right:1.500px solid #3a3a3a;border-bottom:1.800px solid #3a3a3a;border-top:1px solid #fafafa;border-left:1px solid #fafafa;"></div>
<span class="t" style="top:346.8px;font-size:9px;line-height:14px;color:#111;-webkit-text-stroke:.12px;left:242.6px;transform-origin:0 50%;transform:scaleX(0.8185);">Bezeichnung</span>
<div style="left:346.6px;top:347.7px;width:105.79999999999995px;height:12.800000000000011px;background:#ececec;border-right:1.500px solid #3a3a3a;border-bottom:1.800px solid #3a3a3a;border-top:1px solid #fafafa;border-left:1px solid #fafafa;"></div>
<span class="t" style="top:346.8px;font-size:9px;line-height:14px;color:#111;-webkit-text-stroke:.12px;left:348.8px;transform-origin:0 50%;transform:scaleX(0.8119);">Serien Nr.</span>
<div style="left:452.4px;top:347.7px;width:43.0px;height:12.800000000000011px;background:#ececec;border-right:1.500px solid #3a3a3a;border-bottom:1.800px solid #3a3a3a;border-top:1px solid #fafafa;border-left:1px solid #fafafa;"></div>
<span class="t" style="top:346.8px;font-size:9px;line-height:14px;color:#111;-webkit-text-stroke:.12px;left:454.59999999999997px;transform-origin:0 50%;transform:scaleX(0.8303);">Ausgabe</span>
<div style="left:495.4px;top:347.7px;width:43.0px;height:12.800000000000011px;background:#ececec;border-right:1.500px solid #3a3a3a;border-bottom:1.800px solid #3a3a3a;border-top:1px solid #fafafa;border-left:1px solid #fafafa;"></div>
<span class="t" style="top:346.8px;font-size:9px;line-height:14px;color:#111;-webkit-text-stroke:.12px;left:497.59999999999997px;transform-origin:0 50%;transform:scaleX(0.8635);">Rückgabe</span>
<div style="left:538.4px;top:347.7px;width:35.60000000000002px;height:12.800000000000011px;background:#ececec;border-right:1.500px solid #3a3a3a;border-bottom:1.800px solid #3a3a3a;border-top:1px solid #fafafa;border-left:1px solid #fafafa;"></div>
<span class="t" style="top:346.8px;font-size:9px;line-height:14px;color:#111;-webkit-text-stroke:.12px;left:540.6px;transform-origin:0 50%;transform:scaleX(0.8176);">Miete</span>
<div style="left:574px;top:347.7px;width:42.700000000000045px;height:12.800000000000011px;background:#ececec;border-right:1.500px solid #3a3a3a;border-bottom:1.800px solid #3a3a3a;border-top:1px solid #fafafa;border-left:1px solid #fafafa;"></div>
<span class="t" style="top:346.8px;font-size:9px;line-height:14px;color:#111;-webkit-text-stroke:.12px;left:576.2px;transform-origin:0 50%;transform:scaleX(0.817);">Inhalt</span>
<div style="left:616.7px;top:347.7px;width:43.09999999999991px;height:12.800000000000011px;background:#ececec;border-right:1.500px solid #3a3a3a;border-bottom:1.800px solid #3a3a3a;border-top:1px solid #fafafa;border-left:1px solid #fafafa;"></div>
<span class="t" style="top:346.8px;font-size:9px;line-height:14px;color:#111;-webkit-text-stroke:.12px;left:618.9000000000001px;transform-origin:0 50%;transform:scaleX(0.8101);">Rest</span>
<div style="left:659.8px;top:347.7px;width:45.700000000000045px;height:12.800000000000011px;background:#ececec;border-right:1.500px solid #3a3a3a;border-bottom:1.800px solid #3a3a3a;border-top:1px solid #fafafa;border-left:1px solid #fafafa;"></div>
<span class="t" style="top:346.8px;font-size:9px;line-height:14px;color:#111;-webkit-text-stroke:.12px;left:662.0px;transform-origin:0 50%;transform:scaleX(0.823);">Status</span>
<div style="left:204.6px;top:360.5px;width:500.9px;height:12.53px;background:#fff;border-bottom:1px solid #d4d4d4;"></div>
<div style="left:196.4px;top:360.5px;width:8.199999999999989px;height:12.53px;background:#ececec;border-right:1.500px solid #3a3a3a;border-bottom:1.500px solid #3a3a3a;border-top:1px solid #fafafa;"></div>
<svg style="left:199.20000000000002px;top:363.1px" width="4.200" height="7.400" viewBox="0 0 4.200 7.400"><path d="M0 0L4.200 3.700 0 7.400z" fill="#000"/></svg>
<div style="left:239.4px;top:360.5px;width:1px;height:12.53px;background:#d0d0d0;"></div>
<div style="left:345.6px;top:360.5px;width:1px;height:12.53px;background:#d0d0d0;"></div>
<div style="left:451.4px;top:360.5px;width:1px;height:12.53px;background:#d0d0d0;"></div>
<div style="left:494.4px;top:360.5px;width:1px;height:12.53px;background:#d0d0d0;"></div>
<div style="left:537.4px;top:360.5px;width:1px;height:12.53px;background:#d0d0d0;"></div>
<div style="left:573px;top:360.5px;width:1px;height:12.53px;background:#d0d0d0;"></div>
<div style="left:615.7px;top:360.5px;width:1px;height:12.53px;background:#d0d0d0;"></div>
<div style="left:658.8px;top:360.5px;width:1px;height:12.53px;background:#d0d0d0;"></div>
<div style="left:704.5px;top:360.5px;width:1px;height:12.53px;background:#d0d0d0;"></div>
<div style="left:195.5px;top:443.5px;width:605.5px;height:76.0px;background:#fff;border:1px solid #b4b4b4;border-top-color:#a8a8a8;box-shadow:0 0 0 1px #f8f8f8;"></div>
<div style="left:196.5px;top:457.8px;width:603.5px;height:1px;background:#cfcfcf;"></div>
<span class="t" style="top:444.1px;font-size:9.5px;line-height:14px;color:#000;font-weight:bold;-webkit-text-stroke:.22px;left:346.5px;width:300px;text-align:center;transform-origin:50% 50%;transform:scaleX(0.8446);">Informationen</span>
<svg style="left:767px;top:445px" width="14" height="14" viewBox="0 0 14 14"><g transform="translate(0.5,0.8)"><rect x=".700" y=".800" width="9.800" height="9.800" rx=".8" fill="#f4f8fc" stroke="#9ab8dc" stroke-width=".9"/><rect x=".700" y=".800" width="9.800" height="2" fill="#c0d8f0"/><rect x="8" y=".500" width="2" height="1.300" fill="#e86a6a"/><path d="M2.300 4.800h6.600M2.300 6.500h6.600M2.300 8.200h6.600" stroke="#d8e0e8" stroke-width=".6"/></g></svg>
<svg style="left:785px;top:445px" width="14" height="14" viewBox="0 0 14 14"><g transform="translate(0,0.8)"><circle cx="6" cy="6" r="5.200" fill="#4a80d0" stroke="#2a5aa8" stroke-width=".8"/><circle cx="6" cy="6" r="3.800" fill="#5a90dc"/></g></svg>
<div style="left:52px;top:520.3px;width:748px;height:1px;background:#dcdcdc;"></div>
<div style="left:52px;top:521.3px;width:748px;height:1px;background:#fafafa;"></div>
<div style="left:52px;top:525.3px;width:748px;height:1px;background:#e2e2e2;"></div>
<div style="left:56px;top:520px;width:38.5px;height:12px;background:#f0f0f0;"></div>
<span class="t" style="top:519.2px;font-size:9px;line-height:14px;color:#000;-webkit-text-stroke:.12px;left:57px;transform-origin:0 50%;transform:scaleX(0.8464);">Navigation</span>
<div style="left:59.5px;top:532.5px;width:50.0px;height:15.8px;background:#fdfdfd;border:1px solid #d6d6d6;border-bottom-color:#c4c4c4;border-radius:2.500px;"></div>
<svg style="left:71px;top:534px" width="14" height="14" viewBox="0 0 14 14"><g transform="translate(0,0.7)"><path d="M1.500 .600h5.500l2.500 2.500v8.300h-8z" fill="#b9d5f5" stroke="#5a8ed8" stroke-width=".9"/><path d="M7 .600v2.500h2.500" fill="#eef6ff" stroke="#5a8ed8" stroke-width=".6"/><circle cx="9" cy="9.300" r="2.500" fill="#3aa83a" stroke="#1a7a1a" stroke-width=".5"/><path d="M9 7.900v2.800M7.600 9.300h2.800" stroke="#fff" stroke-width=".9"/></g></svg>
<span class="t" style="top:533.7px;font-size:9px;line-height:14px;color:#000;-webkit-text-stroke:.12px;left:85px;transform-origin:0 50%;transform:scaleX(0.8598);">Neu</span>
<div style="left:112px;top:532.5px;width:50px;height:15.8px;background:#fdfdfd;border:1px solid #d6d6d6;border-bottom-color:#c4c4c4;border-radius:2.500px;"></div>
<svg style="left:115px;top:534px" width="14" height="14" viewBox="0 0 14 14"><g transform="translate(0.5,0.7)"><g transform="rotate(-38 6 6)"><rect x="1.300" y="3.900" width="8.600" height="4.200" rx=".9" fill="#f0b636" stroke="#c48a2c" stroke-width=".6"/><path d="M1.600 4.100L-.9 6l2.500 1.900z" fill="#e0a878" stroke="#c08850" stroke-width=".4"/><rect x="9.300" y="3.900" width="1.900" height="4.200" rx=".8" fill="#f6d09a" stroke="#c89a58" stroke-width=".4"/><path d="M2 5.300h7.300M2 6.700h7.300" stroke="#f8da80" stroke-width=".7"/></g></g></svg>
<span class="t" style="top:533.7px;font-size:9px;line-height:14px;color:#000;-webkit-text-stroke:.12px;left:130px;transform-origin:0 50%;transform:scaleX(0.8218);">Editieren</span>
<div style="left:164.5px;top:532.5px;width:51.0px;height:15.8px;background:#fdfdfd;border:1px solid #d6d6d6;border-bottom-color:#c4c4c4;border-radius:2.500px;"></div>
<svg style="left:170px;top:534px" width="14" height="14" viewBox="0 0 14 14"><g transform="translate(0.5,0.7)"><rect x=".500" y=".700" width="11" height="10.800" rx="1" fill="#4a80e0" stroke="#3463c4" stroke-width=".6"/><rect x="2.500" y=".900" width="7" height="4.200" fill="#eef4fd"/><rect x="2" y="6.800" width="8" height="4.500" fill="#7cc45c"/><path d="M2.500 8.300h7M2.500 9.800h7" stroke="#d0f0b8" stroke-width=".6"/></g></svg>
<span class="t" style="top:533.7px;font-size:9px;line-height:14px;color:#000;-webkit-text-stroke:.12px;left:185px;transform-origin:0 50%;transform:scaleX(0.8356);">Sichern</span>
<div style="left:217.5px;top:532.5px;width:8.699999999999989px;height:15.8px;background:#fdfdfd;border:1px solid #d6d6d6;border-bottom-color:#c4c4c4;border-radius:2.500px;"></div>
<svg style="left:218.200px;top:538.300px" width="7.600" height="5" viewBox="0 0 7.600 5"><path d="M0 0h7.600L3.800 5z" fill="#3a7ad8"/><path d="M0 0h7.600" stroke="#2a5ab0" stroke-width=".8"/></svg>
<div style="left:231.2px;top:532.5px;width:51.30000000000001px;height:15.8px;background:#fdfdfd;border:1px solid #d6d6d6;border-bottom-color:#c4c4c4;border-radius:2.500px;"></div>
<svg style="left:234px;top:534px" width="14" height="14" viewBox="0 0 14 14"><g transform="translate(0,0.7)"><rect x=".600" y=".800" width="10" height="9.700" fill="#e9f1e6" stroke="#6a9ee0" stroke-width=".9"/><rect x=".600" y=".800" width="10" height="2.600" fill="#9cc4f0"/><path d="M4 3.400v7M7.300 3.400v7" stroke="#a4c6ec" stroke-width=".8"/></g></svg>
<span class="t" style="top:533.7px;font-size:9px;line-height:14px;color:#000;-webkit-text-stroke:.12px;left:247.5px;transform-origin:0 50%;transform:scaleX(0.8549);">Übersicht</span>
<span class="t" style="top:534.0px;font-size:9px;line-height:14px;color:#000;-webkit-text-stroke:.12px;left:290px;transform-origin:0 50%;transform:scaleX(0.8526);">Vorschau</span>
<div style="left:333.2px;top:536.7px;width:9.5px;height:9.5px;background:#fbfbfb;border:1px solid #767676;border-radius:2.500px;"></div>
<div style="left:350.5px;top:532.5px;width:51.30000000000001px;height:15.8px;background:#fdfdfd;border:1px solid #d6d6d6;border-bottom-color:#c4c4c4;border-radius:2.500px;"></div>
<svg style="left:358px;top:534px" width="14" height="14" viewBox="0 0 14 14"><g transform="translate(0.7,0.7)"><rect x="2.800" y=".600" width="6.400" height="4" fill="#f8fbff" stroke="#6a8ab8" stroke-width=".7"/><rect x=".500" y="4.300" width="11" height="5" rx="1" fill="#c8d0dc" stroke="#5a6a84" stroke-width=".7"/><rect x="2.500" y="7.500" width="7" height="3.800" fill="#f4f8fc" stroke="#6a8ab8" stroke-width=".6"/><path d="M3.500 9h5M3.500 10.200h5" stroke="#9ab0d0" stroke-width=".5"/></g></svg>
<span class="t" style="top:533.7px;font-size:9px;line-height:14px;color:#000;-webkit-text-stroke:.12px;left:373px;transform-origin:0 50%;transform:scaleX(0.8803);">Druck</span>
<div style="left:373px;top:545px;width:5.2px;height:0.8px;background:#222;"></div>
<div style="left:687.5px;top:532.5px;width:50.0px;height:15.8px;background:#fdfdfd;border:1px solid #d6d6d6;border-bottom-color:#c4c4c4;border-radius:2.500px;"></div>
<svg style="left:694px;top:534px" width="14" height="14" viewBox="0 0 14 14"><g transform="translate(0.8,0.7)"><g transform="rotate(-38 6 6)"><rect x="1.300" y="3.900" width="8.600" height="4.200" rx=".9" fill="#f0b636" stroke="#c48a2c" stroke-width=".6"/><path d="M1.600 4.100L-.9 6l2.500 1.900z" fill="#e0a878" stroke="#c08850" stroke-width=".4"/><rect x="9.300" y="3.900" width="1.900" height="4.200" rx=".8" fill="#f6d09a" stroke="#c89a58" stroke-width=".4"/><path d="M2 5.300h7.300M2 6.700h7.300" stroke="#f8da80" stroke-width=".7"/></g></g></svg>
<span class="t" style="top:533.7px;font-size:9px;line-height:14px;color:#000;-webkit-text-stroke:.12px;left:708.7px;transform-origin:0 50%;transform:scaleX(0.8324);">Layout</span>
<div style="left:717.2px;top:545px;width:4px;height:0.8px;background:#222;"></div>
<div style="left:743.7px;top:532.5px;width:50.799999999999955px;height:15.8px;background:#fdfdfd;border:1px solid #d6d6d6;border-bottom-color:#c4c4c4;border-radius:2.500px;"></div>
<svg style="left:752px;top:534px" width="14" height="14" viewBox="0 0 14 14"><g transform="translate(0.8,0.7)"><path d="M5 .600l6 1v10l-6-1z" fill="#d89a4a" stroke="#9a6420" stroke-width=".6"/><rect x="3" y="1" width="2.200" height="9.800" fill="#5a4a3a"/><rect x=".300" y="3.500" width="5.700" height="4.600" rx="1" fill="#3a9a4a" stroke="#1a6a2a" stroke-width=".5"/><path d="M1.500 5.800h2.300M3 4.700l1.300 1.100L3 6.900" stroke="#e8ffe8" stroke-width=".8" fill="none"/></g></svg>
<span class="t" style="top:533.7px;font-size:9px;line-height:14px;color:#000;-webkit-text-stroke:.12px;left:767px;transform-origin:0 50%;transform:scaleX(0.8559);">Ende</span>
<div style="left:456.2px;top:555px;width:1px;height:12px;background:#dadada;"></div>
<div style="left:472.5px;top:555px;width:1px;height:12px;background:#dadada;"></div>
<div style="left:522.5px;top:555px;width:1px;height:12px;background:#dadada;"></div>
<div style="left:561.7px;top:555px;width:1px;height:12px;background:#dadada;"></div>
<div style="left:684.5px;top:555px;width:1px;height:12px;background:#dadada;"></div>
<span class="t" style="top:554.0px;font-size:9px;line-height:14px;color:#111;-webkit-text-stroke:.12px;left:462.5px;transform-origin:0 50%;transform:scaleX(0.8972);">€</span>
<span class="t" style="top:554.0px;font-size:9px;line-height:14px;color:#111;-webkit-text-stroke:.12px;left:480px;transform-origin:0 50%;transform:scaleX(0.8325);">21.05.2025</span>
<span class="t" style="top:554.0px;font-size:9px;line-height:14px;color:#111;-webkit-text-stroke:.12px;left:525.7px;transform-origin:0 50%;transform:scaleX(0.8677);">15:55 Uhr</span>
<span class="t" style="top:554.0px;font-size:9px;line-height:14px;color:#111;-webkit-text-stroke:.12px;left:565px;transform-origin:0 50%;transform:scaleX(0.9343);">Benutzerverwaltung inaktiv</span>
<span class="t" style="top:554.0px;font-size:9px;line-height:14px;color:#111;-webkit-text-stroke:.12px;left:687.5px;transform-origin:0 50%;transform:scaleX(0.9251);">Standardmandant</span>
<svg style="left:791px;top:558px" width="8" height="8" viewBox="0 0 8 8"><g fill="#b8b8b8"><rect x="6" y="0" width="1.300" height="1.300"/><rect x="3.500" y="2.500" width="1.300" height="1.300"/><rect x="6" y="2.500" width="1.300" height="1.300"/><rect x="1" y="5" width="1.300" height="1.300"/><rect x="3.500" y="5" width="1.300" height="1.300"/><rect x="6" y="5" width="1.300" height="1.300"/></g></svg>
<svg style="left:0;top:563.500px" width="4" height="3.500" viewBox="0 0 4 3.500"><path d="M0 .8Q3 1.200 3.400 3.500H0z" fill="#1c80e0"/></svg>
</div>
</body></html>
